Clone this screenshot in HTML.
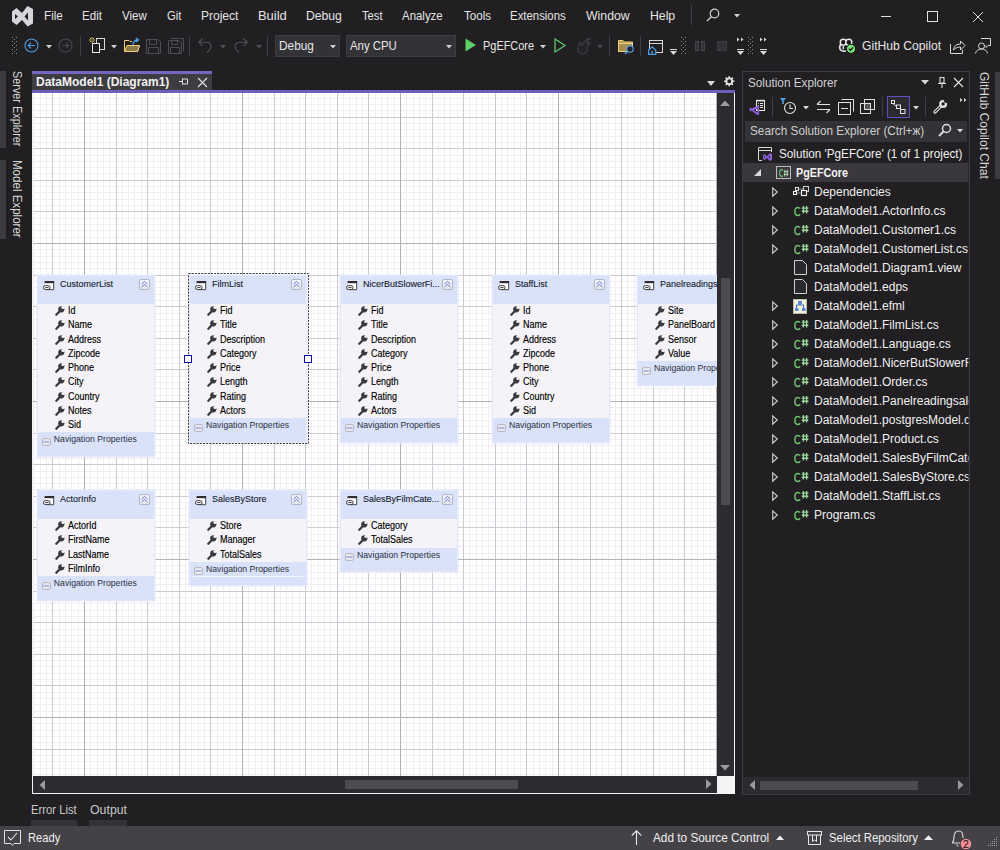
<!DOCTYPE html>
<html><head><meta charset="utf-8"><style>
*{margin:0;padding:0;box-sizing:border-box}
html,body{width:1000px;height:850px;overflow:hidden;background:#211f22;font-family:"Liberation Sans", sans-serif;color:#e6e6e6}
.a{position:absolute}
.t{position:absolute;white-space:nowrap;line-height:1}
svg{position:absolute;overflow:visible}
</style></head>
<body>
<div class="t" style="left:43.5px;top:10px;font-size:12px;color:#e4e4e4;transform:scaleX(0.9722);transform-origin:1.00px 0">File</div>
<div class="t" style="left:81.7px;top:10px;font-size:12px;color:#e4e4e4;transform:scaleX(0.9650);transform-origin:1.00px 0">Edit</div>
<div class="t" style="left:122.0px;top:10px;font-size:12px;color:#e4e4e4;transform:scaleX(0.9615);transform-origin:0.00px 0">View</div>
<div class="t" style="left:167.0px;top:10px;font-size:12px;color:#e4e4e4;transform:scaleX(0.9375);transform-origin:0.00px 0">Git</div>
<div class="t" style="left:201.0px;top:10px;font-size:12px;color:#e4e4e4;transform:scaleX(1.0000);transform-origin:1.00px 0">Project</div>
<div class="t" style="left:258.0px;top:10px;font-size:12px;color:#e4e4e4;transform:scaleX(1.0800);transform-origin:1.00px 0">Build</div>
<div class="t" style="left:305.5px;top:10px;font-size:12px;color:#e4e4e4;transform:scaleX(1.0147);transform-origin:1.00px 0">Debug</div>
<div class="t" style="left:361.5px;top:10px;font-size:12px;color:#e4e4e4;transform:scaleX(0.9318);transform-origin:0.00px 0">Test</div>
<div class="t" style="left:402.0px;top:10px;font-size:12px;color:#e4e4e4;transform:scaleX(0.9535);transform-origin:0.00px 0">Analyze</div>
<div class="t" style="left:464.0px;top:10px;font-size:12px;color:#e4e4e4;transform:scaleX(0.9643);transform-origin:0.00px 0">Tools</div>
<div class="t" style="left:510.0px;top:10px;font-size:12px;color:#e4e4e4;transform:scaleX(0.9483);transform-origin:1.00px 0">Extensions</div>
<div class="t" style="left:586.0px;top:10px;font-size:12px;color:#e4e4e4;transform:scaleX(1.0233);transform-origin:0.00px 0">Window</div>
<div class="t" style="left:649.5px;top:10px;font-size:12px;color:#e4e4e4;transform:scaleX(1.0208);transform-origin:1.00px 0">Help</div>
<svg style="left:12px;top:6px" width="21" height="21" viewBox="0 0 21 21">
<path d="M0 5.5 L4.5 2 L10 7 L15.5 0 L21 3 L21 17.5 L15.5 20.5 L10 14 L4.5 19 L0 15.5 Z M3 8 L3 13 L6 10.5 Z M16 6.5 L12.5 10.5 L16 14.5 Z" fill="#d6d5d9" fill-rule="evenodd"/>
</svg>
<div class="a" style="left:691px;top:5px;width:1px;height:20px;background:#3f3e43"></div>
<svg style="left:706px;top:8px" width="14" height="14" viewBox="0 0 14 14"><circle cx="8.5" cy="5.5" r="4.3" fill="none" stroke="#d0d0d0" stroke-width="1.2"/><line x1="5.3" y1="8.7" x2="1" y2="13" stroke="#d0d0d0" stroke-width="1.3"/></svg>
<svg style="left:734px;top:14px" width="6" height="4" viewBox="0 0 6 4"><path d="M0 0 H6 L3 3.5 Z" fill="#d0d0d0"/></svg>
<div class="a" style="left:881px;top:16px;width:10px;height:1px;background:#e0e0e0"></div>
<div class="a" style="left:927px;top:11px;width:11px;height:11px;border:1px solid #e0e0e0"></div>
<svg style="left:972px;top:11px" width="12" height="12" viewBox="0 0 12 12"><path d="M1 1 L11 11 M11 1 L1 11" stroke="#e0e0e0" stroke-width="1"/></svg>
<div class="a" style="left:12px;top:37px;width:1px;height:1px;background:#8a898c"></div><div class="a" style="left:16px;top:37px;width:1px;height:1px;background:#8a898c"></div><div class="a" style="left:14px;top:39px;width:1px;height:1px;background:#8a898c"></div><div class="a" style="left:12px;top:41px;width:1px;height:1px;background:#8a898c"></div><div class="a" style="left:16px;top:41px;width:1px;height:1px;background:#8a898c"></div><div class="a" style="left:14px;top:43px;width:1px;height:1px;background:#8a898c"></div><div class="a" style="left:12px;top:45px;width:1px;height:1px;background:#8a898c"></div><div class="a" style="left:16px;top:45px;width:1px;height:1px;background:#8a898c"></div><div class="a" style="left:14px;top:47px;width:1px;height:1px;background:#8a898c"></div><div class="a" style="left:12px;top:49px;width:1px;height:1px;background:#8a898c"></div><div class="a" style="left:16px;top:49px;width:1px;height:1px;background:#8a898c"></div><div class="a" style="left:14px;top:51px;width:1px;height:1px;background:#8a898c"></div><div class="a" style="left:12px;top:53px;width:1px;height:1px;background:#8a898c"></div><div class="a" style="left:16px;top:53px;width:1px;height:1px;background:#8a898c"></div>
<svg style="left:24px;top:38px" width="15" height="15" viewBox="0 0 15 15"><circle cx="7.5" cy="7.5" r="6.5" fill="none" stroke="#4b9fe8" stroke-width="1.1"/><path d="M11 7.5 H4.2 M7 4.7 L4.2 7.5 L7 10.3" fill="none" stroke="#4b9fe8" stroke-width="1.1"/></svg>
<svg style="left:46px;top:45px" width="6" height="4" viewBox="0 0 6 4"><path d="M0 0 H6 L3 3.5 Z" fill="#d0d0d0"/></svg>
<svg style="left:58px;top:38px" width="15" height="15" viewBox="0 0 15 15"><circle cx="7.5" cy="7.5" r="6.5" fill="none" stroke="#4a494d" stroke-width="1.1"/><path d="M4 7.5 H10.8 M8 4.7 L10.8 7.5 L8 10.3" fill="none" stroke="#4a494d" stroke-width="1.1"/></svg>
<div class="a" style="left:80px;top:36px;width:1px;height:20px;background:#3f3e43"></div>
<svg style="left:89px;top:37px" width="17" height="17" viewBox="0 0 17 17"><rect x="7.5" y="1.5" width="8" height="11" fill="#211f22" stroke="#d8d8d8"/><rect x="3.5" y="6.5" width="7" height="9" fill="#211f22" stroke="#e8e8e8"/><g stroke="#eccb6a" stroke-width="0.9"><path d="M3 0 V6 M0 3 H6 M1 1 L5 5 M5 1 L1 5"/></g><circle cx="3" cy="3" r="1" fill="#211f22"/></svg>
<svg style="left:111px;top:45px" width="6" height="4" viewBox="0 0 6 4"><path d="M0 0 H6 L3 3.5 Z" fill="#d0d0d0"/></svg>
<svg style="left:124px;top:37px" width="17" height="16" viewBox="0 0 17 16"><path d="M0.5 5.5 V14.5 H13.5 L15.5 8.5 H3.5 L1.5 14" fill="#b49a5a" stroke="#f0cf7a"/><path d="M0.5 5.5 V3.5 H5 L6 4.5 H8" fill="none" stroke="#f0cf7a"/><path d="M0.5 14.5 L3 8.5 H15.5 L13.5 14.5 Z" fill="#8d7a4d" stroke="#f0cf7a"/><path d="M9 8 C9 4 11 3 14 3 M12 1 L14.5 3 L12 5" fill="none" stroke="#4b9fe8" stroke-width="1.3"/></svg>
<svg style="left:146px;top:39px" width="15" height="15" viewBox="0 0 15 15"><path d="M0.5 0.5 H12 L14.5 3 V14.5 H0.5 Z M3.5 0.5 V5.5 H10.5 V0.5 M2.5 14.5 V8.5 H12.5 V14.5" fill="none" stroke="#4f4e52"/></svg>
<svg style="left:168px;top:38px" width="16" height="16" viewBox="0 0 16 16"><path d="M2.5 0.5 H15.5 V13.5" fill="none" stroke="#4f4e52"/><path d="M0.5 2.5 H11 L13.5 5 V15.5 H0.5 Z M3.5 2.5 V6.5 H9.5 V2.5 M2.5 15.5 V9.5 H11.5 V15.5" fill="none" stroke="#4f4e52"/></svg>
<div class="a" style="left:189px;top:36px;width:1px;height:20px;background:#3f3e43"></div>
<svg style="left:198px;top:38px" width="15" height="15" viewBox="0 0 15 15"><path d="M4.5 0.5 L0.8 4.3 L4.5 8 M1 4.3 H8 C11 4.3 13 6 13 8.5 C13 10.5 12 11.5 10.5 13 L9 14.5" fill="none" stroke="#4f4e52" stroke-width="1.1"/></svg>
<svg style="left:220px;top:45px" width="6" height="4" viewBox="0 0 6 4"><path d="M0 0 H6 L3 3.5 Z" fill="#4f4e52"/></svg>
<svg style="left:233px;top:38px" width="15" height="15" viewBox="0 0 15 15"><path d="M10.5 0.5 L14.2 4.3 L10.5 8 M14 4.3 H7 C4 4.3 2 6 2 8.5 C2 10.5 3 11.5 4.5 13 L6 14.5" fill="none" stroke="#4f4e52" stroke-width="1.1"/></svg>
<svg style="left:256px;top:45px" width="6" height="4" viewBox="0 0 6 4"><path d="M0 0 H6 L3 3.5 Z" fill="#4f4e52"/></svg>
<div class="a" style="left:267px;top:36px;width:1px;height:20px;background:#3f3e43"></div>
<div class="a" style="left:275px;top:35px;width:65px;height:22px;background:#333236;border:1px solid #3d3c40"></div>
<div class="t" style="left:278.8px;top:40px;font-size:12px;color:#e6e6e6;transform:scaleX(0.9882);transform-origin:1.00px 0">Debug</div>
<svg style="left:330px;top:45px" width="6" height="4" viewBox="0 0 6 4"><path d="M0 0 H6 L3 3.5 Z" fill="#d0d0d0"/></svg>
<div class="a" style="left:346px;top:35px;width:110px;height:22px;background:#333236;border:1px solid #3d3c40"></div>
<div class="t" style="left:350.1px;top:40px;font-size:12px;color:#e6e6e6;transform:scaleX(0.9490);transform-origin:0.00px 0">Any CPU</div>
<svg style="left:446px;top:45px" width="6" height="4" viewBox="0 0 6 4"><path d="M0 0 H6 L3 3.5 Z" fill="#d0d0d0"/></svg>
<svg style="left:465px;top:38px" width="12" height="14" viewBox="0 0 12 14"><path d="M0.5 0.5 L11 7 L0.5 13.5 Z" fill="#5fcf6a"/></svg>
<div class="t" style="left:482.8px;top:40px;font-size:12px;color:#e6e6e6;transform:scaleX(0.9091);transform-origin:1.00px 0">PgEFCore</div>
<svg style="left:540px;top:45px" width="6" height="4" viewBox="0 0 6 4"><path d="M0 0 H6 L3 3.5 Z" fill="#d0d0d0"/></svg>
<svg style="left:554px;top:38px" width="12" height="15" viewBox="0 0 12 15"><path d="M1 1 L11 7.5 L1 14 Z" fill="none" stroke="#5fcf6a" stroke-width="1.2"/></svg>
<svg style="left:577px;top:38px" width="15" height="17" viewBox="0 0 15 17"><path d="M5.5 15.8 C2.5 15.8 0.5 13.5 0.5 10.8 C0.5 8 2.2 5.8 3.5 4.5 C3.5 6 4 7 5 7.5 C5.5 4.5 8 1.5 13.5 0.5 C11 2 9.5 4 9.5 5.5 C10.5 4.8 12 4.6 13 5 C11 6.5 10.5 8.5 10.5 11 C10.5 13.5 8.5 15.8 5.5 15.8 Z" fill="#262428" stroke="#423f44" stroke-width="1.1"/></svg>
<svg style="left:597px;top:45px" width="6" height="4" viewBox="0 0 6 4"><path d="M0 0 H6 L3 3.5 Z" fill="#4a484c"/></svg>
<div class="a" style="left:609px;top:36px;width:1px;height:20px;background:#3f3e43"></div>
<svg style="left:618px;top:39px" width="17" height="16" viewBox="0 0 17 16"><path d="M0.5 12.5 V1.5 H5 L6.5 3 H14.5 V8" fill="#b49a5a" stroke="#f0cf7a"/><rect x="0.5" y="4.5" width="14" height="8" fill="#a88e52" stroke="#f0cf7a"/><circle cx="12" cy="10" r="3.2" fill="#211f22" stroke="#4b9fe8" stroke-width="1.2"/><path d="M9.8 12.2 L7 15" stroke="#4b9fe8" stroke-width="1.4"/></svg>
<div class="a" style="left:640px;top:36px;width:1px;height:20px;background:#3f3e43"></div>
<svg style="left:648px;top:40px" width="16" height="15" viewBox="0 0 16 15"><rect x="1.5" y="0.5" width="13" height="12" fill="none" stroke="#d8d8d8"/><path d="M1.5 3.5 H14.5" stroke="#d8d8d8"/><path d="M0.6 10.2 L4.2 6.8 L7.8 10.2 V14.4 H0.6 Z" fill="#211f22" stroke="#4b9fe8" stroke-width="1.2"/><rect x="3.4" y="11.2" width="1.6" height="2.4" fill="#4b9fe8"/></svg>
<div class="a" style="left:670px;top:49px;width:7px;height:1px;background:#d8d8d8"></div><svg style="left:670px;top:51px" width="7" height="4" viewBox="0 0 7 4"><path d="M0 0 H7 L3.5 4 Z" fill="#d8d8d8"/></svg>
<div class="a" style="left:681px;top:37px;width:1px;height:1px;background:#8a898c"></div><div class="a" style="left:685px;top:37px;width:1px;height:1px;background:#8a898c"></div><div class="a" style="left:683px;top:39px;width:1px;height:1px;background:#8a898c"></div><div class="a" style="left:681px;top:41px;width:1px;height:1px;background:#8a898c"></div><div class="a" style="left:685px;top:41px;width:1px;height:1px;background:#8a898c"></div><div class="a" style="left:683px;top:43px;width:1px;height:1px;background:#8a898c"></div><div class="a" style="left:681px;top:45px;width:1px;height:1px;background:#8a898c"></div><div class="a" style="left:685px;top:45px;width:1px;height:1px;background:#8a898c"></div><div class="a" style="left:683px;top:47px;width:1px;height:1px;background:#8a898c"></div><div class="a" style="left:681px;top:49px;width:1px;height:1px;background:#8a898c"></div><div class="a" style="left:685px;top:49px;width:1px;height:1px;background:#8a898c"></div><div class="a" style="left:683px;top:51px;width:1px;height:1px;background:#8a898c"></div><div class="a" style="left:681px;top:53px;width:1px;height:1px;background:#8a898c"></div><div class="a" style="left:685px;top:53px;width:1px;height:1px;background:#8a898c"></div>
<div class="a" style="left:695px;top:41px;width:4px;height:10px;background:#343236;border:1px solid #464448"></div><div class="a" style="left:701px;top:41px;width:4px;height:10px;background:#343236;border:1px solid #464448"></div>
<div class="a" style="left:717px;top:41px;width:10px;height:10px;background:#343236;border:1px solid #3e3c40"></div>
<div class="a" style="left:737px;top:49px;width:7px;height:1px;background:#d8d8d8"></div><svg style="left:737px;top:51px" width="7" height="4" viewBox="0 0 7 4"><path d="M0 0 H7 L3.5 4 Z" fill="#d8d8d8"/></svg><svg style="left:737px;top:37px" width="8" height="5" viewBox="0 0 8 4"><path d="M0 0 L2.5 2 L0 4 Z M4 0 L6.5 2 L4 4 Z" fill="#d8d8d8"/></svg>
<div class="a" style="left:748px;top:37px;width:1px;height:1px;background:#8a898c"></div><div class="a" style="left:752px;top:37px;width:1px;height:1px;background:#8a898c"></div><div class="a" style="left:750px;top:39px;width:1px;height:1px;background:#8a898c"></div><div class="a" style="left:748px;top:41px;width:1px;height:1px;background:#8a898c"></div><div class="a" style="left:752px;top:41px;width:1px;height:1px;background:#8a898c"></div><div class="a" style="left:750px;top:43px;width:1px;height:1px;background:#8a898c"></div><div class="a" style="left:748px;top:45px;width:1px;height:1px;background:#8a898c"></div><div class="a" style="left:752px;top:45px;width:1px;height:1px;background:#8a898c"></div><div class="a" style="left:750px;top:47px;width:1px;height:1px;background:#8a898c"></div><div class="a" style="left:748px;top:49px;width:1px;height:1px;background:#8a898c"></div><div class="a" style="left:752px;top:49px;width:1px;height:1px;background:#8a898c"></div><div class="a" style="left:750px;top:51px;width:1px;height:1px;background:#8a898c"></div><div class="a" style="left:748px;top:53px;width:1px;height:1px;background:#8a898c"></div><div class="a" style="left:752px;top:53px;width:1px;height:1px;background:#8a898c"></div>
<div class="a" style="left:760px;top:49px;width:7px;height:1px;background:#d8d8d8"></div><svg style="left:760px;top:51px" width="7" height="4" viewBox="0 0 7 4"><path d="M0 0 H7 L3.5 4 Z" fill="#d8d8d8"/></svg><svg style="left:760px;top:37px" width="8" height="5" viewBox="0 0 8 4"><path d="M0 0 L2.5 2 L0 4 Z M4 0 L6.5 2 L4 4 Z" fill="#d8d8d8"/></svg>
<svg style="left:839px;top:38px" width="18" height="17" viewBox="0 0 18 17"><circle cx="4.3" cy="4.2" r="3" fill="#19171a" stroke="#eaeaea" stroke-width="1.5"/><circle cx="9.8" cy="4.2" r="3" fill="#19171a" stroke="#eaeaea" stroke-width="1.5"/><path d="M1.6 6.5 C0.6 8 0.6 10.5 1.4 11.8 C2.5 13 5 13.3 7 13" fill="none" stroke="#eaeaea" stroke-width="1.5"/><rect x="3.6" y="8.2" width="1.4" height="3" fill="#eaeaea"/><circle cx="12" cy="10.8" r="4.6" fill="#78e078" stroke="#101010" stroke-width="1"/><path d="M9.9 10.6 L11.5 12.2 L14.1 9.4" fill="none" stroke="#101010" stroke-width="1.3"/></svg>
<div class="t" style="left:862.0px;top:40px;font-size:12px;color:#e6e6e6;transform:scaleX(1.0128);transform-origin:0.00px 0">GitHub Copilot</div>
<svg style="left:950px;top:39px" width="16" height="15" viewBox="0 0 16 15"><path d="M0.5 5 V14.5 H12.5 V11" fill="none" stroke="#d8d8d8"/><path d="M3.5 11 C4 6.5 7 5 10.5 5 V2 L15 6.5 L10.5 11 V8 C7.5 8 5 9 3.5 11 Z" fill="none" stroke="#d8d8d8"/></svg>
<svg style="left:975px;top:38px" width="16" height="16" viewBox="0 0 16 16"><path d="M6 0.5 H15.5 V7.5 H13 L11 9.5 V7.5" fill="none" stroke="#d8d8d8"/><circle cx="6.5" cy="8" r="3" fill="#211f22" stroke="#d8d8d8"/><path d="M0.5 15.5 C1 12.5 3.5 11 6.5 11 C9.5 11 12 12.5 12.5 15.5" fill="none" stroke="#d8d8d8"/></svg>
<div class="a" style="left:0;top:71px;width:6px;height:77px;background:#3d3b40"></div>
<div class="a" style="left:0;top:160px;width:6px;height:79px;background:#3d3b40"></div>
<div class="t" style="left:11px;top:71.0px;font-size:12px;color:#d6d6d6;writing-mode:vertical-rl;transform:scaleY(0.9048);transform-origin:0 0">Server Explorer</div>
<div class="t" style="left:11px;top:159.5375px;font-size:12px;color:#d6d6d6;writing-mode:vertical-rl;transform:scaleY(0.9625);transform-origin:0 0">Model Explorer</div>
<div class="a" style="left:995px;top:72px;width:5px;height:107px;background:#3d3c41"></div>
<div class="t" style="left:978px;top:72.0px;font-size:12px;color:#d6d6d6;writing-mode:vertical-rl;transform:scaleY(1.0000);transform-origin:0 0">GitHub Copilot Chat</div>
<div class="a" style="left:32px;top:71px;width:180px;height:3px;background:#7565c4"></div>
<div class="a" style="left:32px;top:74px;width:180px;height:16px;background:#3d3c40"></div>
<div class="t" style="left:36px;top:76px;font-size:12px;font-weight:bold;color:#f2f2f2">DataModel1 (Diagram1)</div>
<svg style="left:179px;top:77px" width="9" height="9" viewBox="0 0 9 9"><path d="M0 4.5 H3.5 M3.5 1.5 V7.5 M3.5 2 H8.5 V7 H3.5" fill="none" stroke="#e0e0e0"/></svg>
<svg style="left:197px;top:77px" width="11" height="11" viewBox="0 0 11 11"><path d="M1 1 L10 10 M10 1 L1 10" stroke="#e6e6e6" stroke-width="1.1"/></svg>
<div class="a" style="left:32px;top:90px;width:703px;height:3px;background:#6f5fbd"></div>
<svg style="left:707px;top:81px" width="8" height="5" viewBox="0 0 8 5"><path d="M0 0 H8 L4 5 Z" fill="#d8d8d8"/></svg>
<svg style="left:723.8px;top:75.8px" width="10.5" height="10.5" viewBox="0 0 12 12"><g fill="#e6e6e6"><rect x="5.1" y="0.2" width="1.8" height="2.6" transform="rotate(0 6 6)"/><rect x="5.1" y="0.2" width="1.8" height="2.6" transform="rotate(45 6 6)"/><rect x="5.1" y="0.2" width="1.8" height="2.6" transform="rotate(90 6 6)"/><rect x="5.1" y="0.2" width="1.8" height="2.6" transform="rotate(135 6 6)"/><rect x="5.1" y="0.2" width="1.8" height="2.6" transform="rotate(180 6 6)"/><rect x="5.1" y="0.2" width="1.8" height="2.6" transform="rotate(225 6 6)"/><rect x="5.1" y="0.2" width="1.8" height="2.6" transform="rotate(270 6 6)"/><rect x="5.1" y="0.2" width="1.8" height="2.6" transform="rotate(315 6 6)"/></g><circle cx="6" cy="6" r="3.3" fill="none" stroke="#e6e6e6" stroke-width="2"/></svg>
<div class="a" style="left:32px;top:93px;width:703px;height:701px;background:#f4f3f6"></div>
<div class="a" style="left:33px;top:93px;width:684px;height:683px;background:#ffffff;overflow:hidden" id="cv"><svg style="left:0;top:0" width="684" height="683" viewBox="0 0 684 683" shape-rendering="crispEdges"><path d="M0.5 0V683M7.5 0V683M13.5 0V683M26.5 0V683M32.5 0V683M38.5 0V683M45.5 0V683M57.5 0V683M64.5 0V683M70.5 0V683M76.5 0V683M89.5 0V683M95.5 0V683M101.5 0V683M108.5 0V683M120.5 0V683M127.5 0V683M133.5 0V683M139.5 0V683M152.5 0V683M158.5 0V683M165.5 0V683M171.5 0V683M184.5 0V683M190.5 0V683M196.5 0V683M203.5 0V683M215.5 0V683M222.5 0V683M228.5 0V683M234.5 0V683M247.5 0V683M253.5 0V683M259.5 0V683M266.5 0V683M278.5 0V683M285.5 0V683M291.5 0V683M297.5 0V683M310.5 0V683M316.5 0V683M323.5 0V683M329.5 0V683M342.5 0V683M348.5 0V683M354.5 0V683M361.5 0V683M373.5 0V683M380.5 0V683M386.5 0V683M392.5 0V683M405.5 0V683M411.5 0V683M417.5 0V683M424.5 0V683M436.5 0V683M443.5 0V683M449.5 0V683M455.5 0V683M468.5 0V683M474.5 0V683M481.5 0V683M487.5 0V683M500.5 0V683M506.5 0V683M512.5 0V683M519.5 0V683M531.5 0V683M538.5 0V683M544.5 0V683M550.5 0V683M563.5 0V683M569.5 0V683M575.5 0V683M582.5 0V683M594.5 0V683M601.5 0V683M607.5 0V683M613.5 0V683M626.5 0V683M632.5 0V683M639.5 0V683M645.5 0V683M658.5 0V683M664.5 0V683M670.5 0V683M677.5 0V683M0 5.5H684M0 11.5H684M0 17.5H684M0 30.5H684M0 36.5H684M0 43.5H684M0 49.5H684M0 62.5H684M0 68.5H684M0 74.5H684M0 80.5H684M0 93.5H684M0 99.5H684M0 106.5H684M0 112.5H684M0 125.5H684M0 131.5H684M0 137.5H684M0 144.5H684M0 156.5H684M0 163.5H684M0 169.5H684M0 175.5H684M0 188.5H684M0 194.5H684M0 201.5H684M0 207.5H684M0 220.5H684M0 226.5H684M0 232.5H684M0 238.5H684M0 251.5H684M0 257.5H684M0 264.5H684M0 270.5H684M0 283.5H684M0 289.5H684M0 295.5H684M0 302.5H684M0 314.5H684M0 321.5H684M0 327.5H684M0 333.5H684M0 346.5H684M0 352.5H684M0 359.5H684M0 365.5H684M0 378.5H684M0 384.5H684M0 390.5H684M0 396.5H684M0 409.5H684M0 415.5H684M0 422.5H684M0 428.5H684M0 441.5H684M0 447.5H684M0 453.5H684M0 460.5H684M0 472.5H684M0 479.5H684M0 485.5H684M0 491.5H684M0 504.5H684M0 510.5H684M0 517.5H684M0 523.5H684M0 536.5H684M0 542.5H684M0 548.5H684M0 554.5H684M0 567.5H684M0 573.5H684M0 580.5H684M0 586.5H684M0 599.5H684M0 605.5H684M0 611.5H684M0 618.5H684M0 630.5H684M0 637.5H684M0 643.5H684M0 649.5H684M0 662.5H684M0 668.5H684M0 675.5H684M0 681.5H684" stroke="#f2edf3" stroke-width="1" fill="none"/><path d="M19.5 0V683M83.5 0V683M114.5 0V683M146.5 0V683M177.5 0V683M241.5 0V683M272.5 0V683M304.5 0V683M335.5 0V683M399.5 0V683M430.5 0V683M462.5 0V683M493.5 0V683M557.5 0V683M588.5 0V683M620.5 0V683M651.5 0V683M0 24.5H684M0 55.5H684M0 87.5H684M0 118.5H684M0 182.5H684M0 213.5H684M0 245.5H684M0 276.5H684M0 340.5H684M0 371.5H684M0 403.5H684M0 434.5H684M0 498.5H684M0 529.5H684M0 561.5H684M0 592.5H684M0 656.5H684" stroke="#cdc9d0" stroke-width="1" fill="none"/><path d="M51.5 0V683M209.5 0V683M367.5 0V683M525.5 0V683M683.5 0V683M0 150.5H684M0 308.5H684M0 466.5H684M0 624.5H684" stroke="#b2afb5" stroke-width="1" fill="none"/></svg><div class="a" style="left:4.799999999999997px;top:182.5px;width:116px;height:180.25px;background:#d9e2f9;box-shadow:0 0 0 1.5px #e4eafa"><svg style="left:5px;top:5.5px" width="12" height="10" viewBox="0 0 12 10"><rect x="2" y="2" width="8.8" height="6.6" fill="#ffffff"/><rect x="1.6" y="0" width="9.6" height="2.2" fill="#303032"/><path d="M10.7 2 V8.7 H5" fill="none" stroke="#454547" stroke-width="1"/><rect x="0.5" y="4.6" width="6.6" height="4" rx="2" fill="#ffffff" stroke="#363638" stroke-width="1"/><path d="M2.2 6.6 H5.6" stroke="#363638" stroke-width="1"/></svg><div class="t" style="left:22px;top:3.2px;font-size:9.5px;color:#141a2c;transform:scaleX(0.945);transform-origin:0 0;-webkit-text-stroke:0.1px #141a2c">CustomerList</div><svg style="right:3.8px;top:3.5px" width="11" height="11" viewBox="0 0 11 11"><defs><linearGradient id="cbg" x1="0" y1="0" x2="0" y2="1"><stop offset="0" stop-color="#f8f8fc"/><stop offset="1" stop-color="#e2e4ec"/></linearGradient></defs><rect x="0.5" y="0.5" width="10" height="10" rx="1.5" fill="url(#cbg)" stroke="#b4b6be"/><path d="M2.6 5 L5.5 2.4 L8.4 5 M2.6 8 L5.5 5.4 L8.4 8" fill="none" stroke="#4a6fd6" stroke-width="0.9"/></svg><div class="a" style="left:0;top:28.5px;width:116px;height:128.25px;background:#f5f3f7"><div class="a" style="left:17px;top:2.2px;width:10px;height:10px"><svg style="left:0;top:0" width="10" height="10" viewBox="0 0 10 10"><path d="M1.3 8.7 L5 5" stroke="#3a3a3c" stroke-width="2.3" stroke-linecap="round"/><circle cx="6.3" cy="3.3" r="3.1" fill="#3a3a3c"/><circle cx="7.9" cy="1.5" r="1.55" fill="#f5f3f7"/></svg></div><div class="t" style="left:30px;top:2.1px;font-size:10px;color:#000;transform:scaleX(0.9);transform-origin:0 0;-webkit-text-stroke:0.15px #000">Id</div><div class="a" style="left:17px;top:16.45px;width:10px;height:10px"><svg style="left:0;top:0" width="10" height="10" viewBox="0 0 10 10"><path d="M1.3 8.7 L5 5" stroke="#3a3a3c" stroke-width="2.3" stroke-linecap="round"/><circle cx="6.3" cy="3.3" r="3.1" fill="#3a3a3c"/><circle cx="7.9" cy="1.5" r="1.55" fill="#f5f3f7"/></svg></div><div class="t" style="left:30px;top:16.35px;font-size:10px;color:#000;transform:scaleX(0.9);transform-origin:0 0;-webkit-text-stroke:0.15px #000">Name</div><div class="a" style="left:17px;top:30.7px;width:10px;height:10px"><svg style="left:0;top:0" width="10" height="10" viewBox="0 0 10 10"><path d="M1.3 8.7 L5 5" stroke="#3a3a3c" stroke-width="2.3" stroke-linecap="round"/><circle cx="6.3" cy="3.3" r="3.1" fill="#3a3a3c"/><circle cx="7.9" cy="1.5" r="1.55" fill="#f5f3f7"/></svg></div><div class="t" style="left:30px;top:30.6px;font-size:10px;color:#000;transform:scaleX(0.9);transform-origin:0 0;-webkit-text-stroke:0.15px #000">Address</div><div class="a" style="left:17px;top:44.95px;width:10px;height:10px"><svg style="left:0;top:0" width="10" height="10" viewBox="0 0 10 10"><path d="M1.3 8.7 L5 5" stroke="#3a3a3c" stroke-width="2.3" stroke-linecap="round"/><circle cx="6.3" cy="3.3" r="3.1" fill="#3a3a3c"/><circle cx="7.9" cy="1.5" r="1.55" fill="#f5f3f7"/></svg></div><div class="t" style="left:30px;top:44.85px;font-size:10px;color:#000;transform:scaleX(0.9);transform-origin:0 0;-webkit-text-stroke:0.15px #000">Zipcode</div><div class="a" style="left:17px;top:59.2px;width:10px;height:10px"><svg style="left:0;top:0" width="10" height="10" viewBox="0 0 10 10"><path d="M1.3 8.7 L5 5" stroke="#3a3a3c" stroke-width="2.3" stroke-linecap="round"/><circle cx="6.3" cy="3.3" r="3.1" fill="#3a3a3c"/><circle cx="7.9" cy="1.5" r="1.55" fill="#f5f3f7"/></svg></div><div class="t" style="left:30px;top:59.1px;font-size:10px;color:#000;transform:scaleX(0.9);transform-origin:0 0;-webkit-text-stroke:0.15px #000">Phone</div><div class="a" style="left:17px;top:73.45px;width:10px;height:10px"><svg style="left:0;top:0" width="10" height="10" viewBox="0 0 10 10"><path d="M1.3 8.7 L5 5" stroke="#3a3a3c" stroke-width="2.3" stroke-linecap="round"/><circle cx="6.3" cy="3.3" r="3.1" fill="#3a3a3c"/><circle cx="7.9" cy="1.5" r="1.55" fill="#f5f3f7"/></svg></div><div class="t" style="left:30px;top:73.35px;font-size:10px;color:#000;transform:scaleX(0.9);transform-origin:0 0;-webkit-text-stroke:0.15px #000">City</div><div class="a" style="left:17px;top:87.7px;width:10px;height:10px"><svg style="left:0;top:0" width="10" height="10" viewBox="0 0 10 10"><path d="M1.3 8.7 L5 5" stroke="#3a3a3c" stroke-width="2.3" stroke-linecap="round"/><circle cx="6.3" cy="3.3" r="3.1" fill="#3a3a3c"/><circle cx="7.9" cy="1.5" r="1.55" fill="#f5f3f7"/></svg></div><div class="t" style="left:30px;top:87.6px;font-size:10px;color:#000;transform:scaleX(0.9);transform-origin:0 0;-webkit-text-stroke:0.15px #000">Country</div><div class="a" style="left:17px;top:101.95px;width:10px;height:10px"><svg style="left:0;top:0" width="10" height="10" viewBox="0 0 10 10"><path d="M1.3 8.7 L5 5" stroke="#3a3a3c" stroke-width="2.3" stroke-linecap="round"/><circle cx="6.3" cy="3.3" r="3.1" fill="#3a3a3c"/><circle cx="7.9" cy="1.5" r="1.55" fill="#f5f3f7"/></svg></div><div class="t" style="left:30px;top:101.85px;font-size:10px;color:#000;transform:scaleX(0.9);transform-origin:0 0;-webkit-text-stroke:0.15px #000">Notes</div><div class="a" style="left:17px;top:116.2px;width:10px;height:10px"><svg style="left:0;top:0" width="10" height="10" viewBox="0 0 10 10"><path d="M1.3 8.7 L5 5" stroke="#3a3a3c" stroke-width="2.3" stroke-linecap="round"/><circle cx="6.3" cy="3.3" r="3.1" fill="#3a3a3c"/><circle cx="7.9" cy="1.5" r="1.55" fill="#f5f3f7"/></svg></div><div class="t" style="left:30px;top:116.1px;font-size:10px;color:#000;transform:scaleX(0.9);transform-origin:0 0;-webkit-text-stroke:0.15px #000">Sid</div></div><div class="a" style="left:0;top:156.75px;width:116px;height:23.5px"><svg style="left:4px;top:5.5px" width="9" height="8" viewBox="0 0 9 8"><rect x="0.5" y="0.5" width="8" height="7" rx="1.5" fill="#e8e8ee" stroke="#b9b9c0"/><path d="M1.5 4 H7.5" stroke="#7b8fd0"/></svg><div class="t" style="left:16px;top:3px;font-size:8.7px;color:#2a3040">Navigation Properties</div></div></div><div class="a" style="left:157px;top:182.5px;width:116px;height:166.0px;background:#d9e2f9;box-shadow:0 0 0 1.5px #e4eafa"><svg style="left:5px;top:5.5px" width="12" height="10" viewBox="0 0 12 10"><rect x="2" y="2" width="8.8" height="6.6" fill="#ffffff"/><rect x="1.6" y="0" width="9.6" height="2.2" fill="#303032"/><path d="M10.7 2 V8.7 H5" fill="none" stroke="#454547" stroke-width="1"/><rect x="0.5" y="4.6" width="6.6" height="4" rx="2" fill="#ffffff" stroke="#363638" stroke-width="1"/><path d="M2.2 6.6 H5.6" stroke="#363638" stroke-width="1"/></svg><div class="t" style="left:22px;top:3.2px;font-size:9.5px;color:#141a2c;transform:scaleX(0.945);transform-origin:0 0;-webkit-text-stroke:0.1px #141a2c">FilmList</div><svg style="right:3.8px;top:3.5px" width="11" height="11" viewBox="0 0 11 11"><defs><linearGradient id="cbg" x1="0" y1="0" x2="0" y2="1"><stop offset="0" stop-color="#f8f8fc"/><stop offset="1" stop-color="#e2e4ec"/></linearGradient></defs><rect x="0.5" y="0.5" width="10" height="10" rx="1.5" fill="url(#cbg)" stroke="#b4b6be"/><path d="M2.6 5 L5.5 2.4 L8.4 5 M2.6 8 L5.5 5.4 L8.4 8" fill="none" stroke="#4a6fd6" stroke-width="0.9"/></svg><div class="a" style="left:0;top:28.5px;width:116px;height:114.0px;background:#f5f3f7"><div class="a" style="left:17px;top:2.2px;width:10px;height:10px"><svg style="left:0;top:0" width="10" height="10" viewBox="0 0 10 10"><path d="M1.3 8.7 L5 5" stroke="#3a3a3c" stroke-width="2.3" stroke-linecap="round"/><circle cx="6.3" cy="3.3" r="3.1" fill="#3a3a3c"/><circle cx="7.9" cy="1.5" r="1.55" fill="#f5f3f7"/></svg></div><div class="t" style="left:30px;top:2.1px;font-size:10px;color:#000;transform:scaleX(0.9);transform-origin:0 0;-webkit-text-stroke:0.15px #000">Fid</div><div class="a" style="left:17px;top:16.45px;width:10px;height:10px"><svg style="left:0;top:0" width="10" height="10" viewBox="0 0 10 10"><path d="M1.3 8.7 L5 5" stroke="#3a3a3c" stroke-width="2.3" stroke-linecap="round"/><circle cx="6.3" cy="3.3" r="3.1" fill="#3a3a3c"/><circle cx="7.9" cy="1.5" r="1.55" fill="#f5f3f7"/></svg></div><div class="t" style="left:30px;top:16.35px;font-size:10px;color:#000;transform:scaleX(0.9);transform-origin:0 0;-webkit-text-stroke:0.15px #000">Title</div><div class="a" style="left:17px;top:30.7px;width:10px;height:10px"><svg style="left:0;top:0" width="10" height="10" viewBox="0 0 10 10"><path d="M1.3 8.7 L5 5" stroke="#3a3a3c" stroke-width="2.3" stroke-linecap="round"/><circle cx="6.3" cy="3.3" r="3.1" fill="#3a3a3c"/><circle cx="7.9" cy="1.5" r="1.55" fill="#f5f3f7"/></svg></div><div class="t" style="left:30px;top:30.6px;font-size:10px;color:#000;transform:scaleX(0.9);transform-origin:0 0;-webkit-text-stroke:0.15px #000">Description</div><div class="a" style="left:17px;top:44.95px;width:10px;height:10px"><svg style="left:0;top:0" width="10" height="10" viewBox="0 0 10 10"><path d="M1.3 8.7 L5 5" stroke="#3a3a3c" stroke-width="2.3" stroke-linecap="round"/><circle cx="6.3" cy="3.3" r="3.1" fill="#3a3a3c"/><circle cx="7.9" cy="1.5" r="1.55" fill="#f5f3f7"/></svg></div><div class="t" style="left:30px;top:44.85px;font-size:10px;color:#000;transform:scaleX(0.9);transform-origin:0 0;-webkit-text-stroke:0.15px #000">Category</div><div class="a" style="left:17px;top:59.2px;width:10px;height:10px"><svg style="left:0;top:0" width="10" height="10" viewBox="0 0 10 10"><path d="M1.3 8.7 L5 5" stroke="#3a3a3c" stroke-width="2.3" stroke-linecap="round"/><circle cx="6.3" cy="3.3" r="3.1" fill="#3a3a3c"/><circle cx="7.9" cy="1.5" r="1.55" fill="#f5f3f7"/></svg></div><div class="t" style="left:30px;top:59.1px;font-size:10px;color:#000;transform:scaleX(0.9);transform-origin:0 0;-webkit-text-stroke:0.15px #000">Price</div><div class="a" style="left:17px;top:73.45px;width:10px;height:10px"><svg style="left:0;top:0" width="10" height="10" viewBox="0 0 10 10"><path d="M1.3 8.7 L5 5" stroke="#3a3a3c" stroke-width="2.3" stroke-linecap="round"/><circle cx="6.3" cy="3.3" r="3.1" fill="#3a3a3c"/><circle cx="7.9" cy="1.5" r="1.55" fill="#f5f3f7"/></svg></div><div class="t" style="left:30px;top:73.35px;font-size:10px;color:#000;transform:scaleX(0.9);transform-origin:0 0;-webkit-text-stroke:0.15px #000">Length</div><div class="a" style="left:17px;top:87.7px;width:10px;height:10px"><svg style="left:0;top:0" width="10" height="10" viewBox="0 0 10 10"><path d="M1.3 8.7 L5 5" stroke="#3a3a3c" stroke-width="2.3" stroke-linecap="round"/><circle cx="6.3" cy="3.3" r="3.1" fill="#3a3a3c"/><circle cx="7.9" cy="1.5" r="1.55" fill="#f5f3f7"/></svg></div><div class="t" style="left:30px;top:87.6px;font-size:10px;color:#000;transform:scaleX(0.9);transform-origin:0 0;-webkit-text-stroke:0.15px #000">Rating</div><div class="a" style="left:17px;top:101.95px;width:10px;height:10px"><svg style="left:0;top:0" width="10" height="10" viewBox="0 0 10 10"><path d="M1.3 8.7 L5 5" stroke="#3a3a3c" stroke-width="2.3" stroke-linecap="round"/><circle cx="6.3" cy="3.3" r="3.1" fill="#3a3a3c"/><circle cx="7.9" cy="1.5" r="1.55" fill="#f5f3f7"/></svg></div><div class="t" style="left:30px;top:101.85px;font-size:10px;color:#000;transform:scaleX(0.9);transform-origin:0 0;-webkit-text-stroke:0.15px #000">Actors</div></div><div class="a" style="left:0;top:142.5px;width:116px;height:23.5px"><svg style="left:4px;top:5.5px" width="9" height="8" viewBox="0 0 9 8"><rect x="0.5" y="0.5" width="8" height="7" rx="1.5" fill="#e8e8ee" stroke="#b9b9c0"/><path d="M1.5 4 H7.5" stroke="#7b8fd0"/></svg><div class="t" style="left:16px;top:3px;font-size:8.7px;color:#2a3040">Navigation Properties</div></div></div><svg style="left:154.5px;top:180.0px" width="121" height="171.0" viewBox="0 0 121 171.0"><rect x="0.5" y="0.5" width="120" height="170.0" fill="none" stroke="#3a3a3a" stroke-width="1" stroke-dasharray="2 1.2"/></svg><div class="a" style="left:151px;top:261.5px;width:8px;height:8px;border:1.5px solid #1010a8;background:#fff"></div><div class="a" style="left:271px;top:261.5px;width:8px;height:8px;border:1.5px solid #1010a8;background:#fff"></div><div class="a" style="left:308px;top:182.5px;width:116px;height:166.0px;background:#d9e2f9;box-shadow:0 0 0 1.5px #e4eafa"><svg style="left:5px;top:5.5px" width="12" height="10" viewBox="0 0 12 10"><rect x="2" y="2" width="8.8" height="6.6" fill="#ffffff"/><rect x="1.6" y="0" width="9.6" height="2.2" fill="#303032"/><path d="M10.7 2 V8.7 H5" fill="none" stroke="#454547" stroke-width="1"/><rect x="0.5" y="4.6" width="6.6" height="4" rx="2" fill="#ffffff" stroke="#363638" stroke-width="1"/><path d="M2.2 6.6 H5.6" stroke="#363638" stroke-width="1"/></svg><div class="t" style="left:22px;top:3.2px;font-size:9.5px;color:#141a2c;transform:scaleX(0.945);transform-origin:0 0;-webkit-text-stroke:0.1px #141a2c">NicerButSlowerFi...</div><svg style="right:3.8px;top:3.5px" width="11" height="11" viewBox="0 0 11 11"><defs><linearGradient id="cbg" x1="0" y1="0" x2="0" y2="1"><stop offset="0" stop-color="#f8f8fc"/><stop offset="1" stop-color="#e2e4ec"/></linearGradient></defs><rect x="0.5" y="0.5" width="10" height="10" rx="1.5" fill="url(#cbg)" stroke="#b4b6be"/><path d="M2.6 5 L5.5 2.4 L8.4 5 M2.6 8 L5.5 5.4 L8.4 8" fill="none" stroke="#4a6fd6" stroke-width="0.9"/></svg><div class="a" style="left:0;top:28.5px;width:116px;height:114.0px;background:#f5f3f7"><div class="a" style="left:17px;top:2.2px;width:10px;height:10px"><svg style="left:0;top:0" width="10" height="10" viewBox="0 0 10 10"><path d="M1.3 8.7 L5 5" stroke="#3a3a3c" stroke-width="2.3" stroke-linecap="round"/><circle cx="6.3" cy="3.3" r="3.1" fill="#3a3a3c"/><circle cx="7.9" cy="1.5" r="1.55" fill="#f5f3f7"/></svg></div><div class="t" style="left:30px;top:2.1px;font-size:10px;color:#000;transform:scaleX(0.9);transform-origin:0 0;-webkit-text-stroke:0.15px #000">Fid</div><div class="a" style="left:17px;top:16.45px;width:10px;height:10px"><svg style="left:0;top:0" width="10" height="10" viewBox="0 0 10 10"><path d="M1.3 8.7 L5 5" stroke="#3a3a3c" stroke-width="2.3" stroke-linecap="round"/><circle cx="6.3" cy="3.3" r="3.1" fill="#3a3a3c"/><circle cx="7.9" cy="1.5" r="1.55" fill="#f5f3f7"/></svg></div><div class="t" style="left:30px;top:16.35px;font-size:10px;color:#000;transform:scaleX(0.9);transform-origin:0 0;-webkit-text-stroke:0.15px #000">Title</div><div class="a" style="left:17px;top:30.7px;width:10px;height:10px"><svg style="left:0;top:0" width="10" height="10" viewBox="0 0 10 10"><path d="M1.3 8.7 L5 5" stroke="#3a3a3c" stroke-width="2.3" stroke-linecap="round"/><circle cx="6.3" cy="3.3" r="3.1" fill="#3a3a3c"/><circle cx="7.9" cy="1.5" r="1.55" fill="#f5f3f7"/></svg></div><div class="t" style="left:30px;top:30.6px;font-size:10px;color:#000;transform:scaleX(0.9);transform-origin:0 0;-webkit-text-stroke:0.15px #000">Description</div><div class="a" style="left:17px;top:44.95px;width:10px;height:10px"><svg style="left:0;top:0" width="10" height="10" viewBox="0 0 10 10"><path d="M1.3 8.7 L5 5" stroke="#3a3a3c" stroke-width="2.3" stroke-linecap="round"/><circle cx="6.3" cy="3.3" r="3.1" fill="#3a3a3c"/><circle cx="7.9" cy="1.5" r="1.55" fill="#f5f3f7"/></svg></div><div class="t" style="left:30px;top:44.85px;font-size:10px;color:#000;transform:scaleX(0.9);transform-origin:0 0;-webkit-text-stroke:0.15px #000">Category</div><div class="a" style="left:17px;top:59.2px;width:10px;height:10px"><svg style="left:0;top:0" width="10" height="10" viewBox="0 0 10 10"><path d="M1.3 8.7 L5 5" stroke="#3a3a3c" stroke-width="2.3" stroke-linecap="round"/><circle cx="6.3" cy="3.3" r="3.1" fill="#3a3a3c"/><circle cx="7.9" cy="1.5" r="1.55" fill="#f5f3f7"/></svg></div><div class="t" style="left:30px;top:59.1px;font-size:10px;color:#000;transform:scaleX(0.9);transform-origin:0 0;-webkit-text-stroke:0.15px #000">Price</div><div class="a" style="left:17px;top:73.45px;width:10px;height:10px"><svg style="left:0;top:0" width="10" height="10" viewBox="0 0 10 10"><path d="M1.3 8.7 L5 5" stroke="#3a3a3c" stroke-width="2.3" stroke-linecap="round"/><circle cx="6.3" cy="3.3" r="3.1" fill="#3a3a3c"/><circle cx="7.9" cy="1.5" r="1.55" fill="#f5f3f7"/></svg></div><div class="t" style="left:30px;top:73.35px;font-size:10px;color:#000;transform:scaleX(0.9);transform-origin:0 0;-webkit-text-stroke:0.15px #000">Length</div><div class="a" style="left:17px;top:87.7px;width:10px;height:10px"><svg style="left:0;top:0" width="10" height="10" viewBox="0 0 10 10"><path d="M1.3 8.7 L5 5" stroke="#3a3a3c" stroke-width="2.3" stroke-linecap="round"/><circle cx="6.3" cy="3.3" r="3.1" fill="#3a3a3c"/><circle cx="7.9" cy="1.5" r="1.55" fill="#f5f3f7"/></svg></div><div class="t" style="left:30px;top:87.6px;font-size:10px;color:#000;transform:scaleX(0.9);transform-origin:0 0;-webkit-text-stroke:0.15px #000">Rating</div><div class="a" style="left:17px;top:101.95px;width:10px;height:10px"><svg style="left:0;top:0" width="10" height="10" viewBox="0 0 10 10"><path d="M1.3 8.7 L5 5" stroke="#3a3a3c" stroke-width="2.3" stroke-linecap="round"/><circle cx="6.3" cy="3.3" r="3.1" fill="#3a3a3c"/><circle cx="7.9" cy="1.5" r="1.55" fill="#f5f3f7"/></svg></div><div class="t" style="left:30px;top:101.85px;font-size:10px;color:#000;transform:scaleX(0.9);transform-origin:0 0;-webkit-text-stroke:0.15px #000">Actors</div></div><div class="a" style="left:0;top:142.5px;width:116px;height:23.5px"><svg style="left:4px;top:5.5px" width="9" height="8" viewBox="0 0 9 8"><rect x="0.5" y="0.5" width="8" height="7" rx="1.5" fill="#e8e8ee" stroke="#b9b9c0"/><path d="M1.5 4 H7.5" stroke="#7b8fd0"/></svg><div class="t" style="left:16px;top:3px;font-size:8.7px;color:#2a3040">Navigation Properties</div></div></div><div class="a" style="left:460px;top:182.5px;width:116px;height:166.0px;background:#d9e2f9;box-shadow:0 0 0 1.5px #e4eafa"><svg style="left:5px;top:5.5px" width="12" height="10" viewBox="0 0 12 10"><rect x="2" y="2" width="8.8" height="6.6" fill="#ffffff"/><rect x="1.6" y="0" width="9.6" height="2.2" fill="#303032"/><path d="M10.7 2 V8.7 H5" fill="none" stroke="#454547" stroke-width="1"/><rect x="0.5" y="4.6" width="6.6" height="4" rx="2" fill="#ffffff" stroke="#363638" stroke-width="1"/><path d="M2.2 6.6 H5.6" stroke="#363638" stroke-width="1"/></svg><div class="t" style="left:22px;top:3.2px;font-size:9.5px;color:#141a2c;transform:scaleX(0.945);transform-origin:0 0;-webkit-text-stroke:0.1px #141a2c">StaffList</div><svg style="right:3.8px;top:3.5px" width="11" height="11" viewBox="0 0 11 11"><defs><linearGradient id="cbg" x1="0" y1="0" x2="0" y2="1"><stop offset="0" stop-color="#f8f8fc"/><stop offset="1" stop-color="#e2e4ec"/></linearGradient></defs><rect x="0.5" y="0.5" width="10" height="10" rx="1.5" fill="url(#cbg)" stroke="#b4b6be"/><path d="M2.6 5 L5.5 2.4 L8.4 5 M2.6 8 L5.5 5.4 L8.4 8" fill="none" stroke="#4a6fd6" stroke-width="0.9"/></svg><div class="a" style="left:0;top:28.5px;width:116px;height:114.0px;background:#f5f3f7"><div class="a" style="left:17px;top:2.2px;width:10px;height:10px"><svg style="left:0;top:0" width="10" height="10" viewBox="0 0 10 10"><path d="M1.3 8.7 L5 5" stroke="#3a3a3c" stroke-width="2.3" stroke-linecap="round"/><circle cx="6.3" cy="3.3" r="3.1" fill="#3a3a3c"/><circle cx="7.9" cy="1.5" r="1.55" fill="#f5f3f7"/></svg></div><div class="t" style="left:30px;top:2.1px;font-size:10px;color:#000;transform:scaleX(0.9);transform-origin:0 0;-webkit-text-stroke:0.15px #000">Id</div><div class="a" style="left:17px;top:16.45px;width:10px;height:10px"><svg style="left:0;top:0" width="10" height="10" viewBox="0 0 10 10"><path d="M1.3 8.7 L5 5" stroke="#3a3a3c" stroke-width="2.3" stroke-linecap="round"/><circle cx="6.3" cy="3.3" r="3.1" fill="#3a3a3c"/><circle cx="7.9" cy="1.5" r="1.55" fill="#f5f3f7"/></svg></div><div class="t" style="left:30px;top:16.35px;font-size:10px;color:#000;transform:scaleX(0.9);transform-origin:0 0;-webkit-text-stroke:0.15px #000">Name</div><div class="a" style="left:17px;top:30.7px;width:10px;height:10px"><svg style="left:0;top:0" width="10" height="10" viewBox="0 0 10 10"><path d="M1.3 8.7 L5 5" stroke="#3a3a3c" stroke-width="2.3" stroke-linecap="round"/><circle cx="6.3" cy="3.3" r="3.1" fill="#3a3a3c"/><circle cx="7.9" cy="1.5" r="1.55" fill="#f5f3f7"/></svg></div><div class="t" style="left:30px;top:30.6px;font-size:10px;color:#000;transform:scaleX(0.9);transform-origin:0 0;-webkit-text-stroke:0.15px #000">Address</div><div class="a" style="left:17px;top:44.95px;width:10px;height:10px"><svg style="left:0;top:0" width="10" height="10" viewBox="0 0 10 10"><path d="M1.3 8.7 L5 5" stroke="#3a3a3c" stroke-width="2.3" stroke-linecap="round"/><circle cx="6.3" cy="3.3" r="3.1" fill="#3a3a3c"/><circle cx="7.9" cy="1.5" r="1.55" fill="#f5f3f7"/></svg></div><div class="t" style="left:30px;top:44.85px;font-size:10px;color:#000;transform:scaleX(0.9);transform-origin:0 0;-webkit-text-stroke:0.15px #000">Zipcode</div><div class="a" style="left:17px;top:59.2px;width:10px;height:10px"><svg style="left:0;top:0" width="10" height="10" viewBox="0 0 10 10"><path d="M1.3 8.7 L5 5" stroke="#3a3a3c" stroke-width="2.3" stroke-linecap="round"/><circle cx="6.3" cy="3.3" r="3.1" fill="#3a3a3c"/><circle cx="7.9" cy="1.5" r="1.55" fill="#f5f3f7"/></svg></div><div class="t" style="left:30px;top:59.1px;font-size:10px;color:#000;transform:scaleX(0.9);transform-origin:0 0;-webkit-text-stroke:0.15px #000">Phone</div><div class="a" style="left:17px;top:73.45px;width:10px;height:10px"><svg style="left:0;top:0" width="10" height="10" viewBox="0 0 10 10"><path d="M1.3 8.7 L5 5" stroke="#3a3a3c" stroke-width="2.3" stroke-linecap="round"/><circle cx="6.3" cy="3.3" r="3.1" fill="#3a3a3c"/><circle cx="7.9" cy="1.5" r="1.55" fill="#f5f3f7"/></svg></div><div class="t" style="left:30px;top:73.35px;font-size:10px;color:#000;transform:scaleX(0.9);transform-origin:0 0;-webkit-text-stroke:0.15px #000">City</div><div class="a" style="left:17px;top:87.7px;width:10px;height:10px"><svg style="left:0;top:0" width="10" height="10" viewBox="0 0 10 10"><path d="M1.3 8.7 L5 5" stroke="#3a3a3c" stroke-width="2.3" stroke-linecap="round"/><circle cx="6.3" cy="3.3" r="3.1" fill="#3a3a3c"/><circle cx="7.9" cy="1.5" r="1.55" fill="#f5f3f7"/></svg></div><div class="t" style="left:30px;top:87.6px;font-size:10px;color:#000;transform:scaleX(0.9);transform-origin:0 0;-webkit-text-stroke:0.15px #000">Country</div><div class="a" style="left:17px;top:101.95px;width:10px;height:10px"><svg style="left:0;top:0" width="10" height="10" viewBox="0 0 10 10"><path d="M1.3 8.7 L5 5" stroke="#3a3a3c" stroke-width="2.3" stroke-linecap="round"/><circle cx="6.3" cy="3.3" r="3.1" fill="#3a3a3c"/><circle cx="7.9" cy="1.5" r="1.55" fill="#f5f3f7"/></svg></div><div class="t" style="left:30px;top:101.85px;font-size:10px;color:#000;transform:scaleX(0.9);transform-origin:0 0;-webkit-text-stroke:0.15px #000">Sid</div></div><div class="a" style="left:0;top:142.5px;width:116px;height:23.5px"><svg style="left:4px;top:5.5px" width="9" height="8" viewBox="0 0 9 8"><rect x="0.5" y="0.5" width="8" height="7" rx="1.5" fill="#e8e8ee" stroke="#b9b9c0"/><path d="M1.5 4 H7.5" stroke="#7b8fd0"/></svg><div class="t" style="left:16px;top:3px;font-size:8.7px;color:#2a3040">Navigation Properties</div></div></div><div class="a" style="left:605px;top:182.5px;width:116px;height:109.0px;background:#d9e2f9;box-shadow:0 0 0 1.5px #e4eafa"><svg style="left:5px;top:5.5px" width="12" height="10" viewBox="0 0 12 10"><rect x="2" y="2" width="8.8" height="6.6" fill="#ffffff"/><rect x="1.6" y="0" width="9.6" height="2.2" fill="#303032"/><path d="M10.7 2 V8.7 H5" fill="none" stroke="#454547" stroke-width="1"/><rect x="0.5" y="4.6" width="6.6" height="4" rx="2" fill="#ffffff" stroke="#363638" stroke-width="1"/><path d="M2.2 6.6 H5.6" stroke="#363638" stroke-width="1"/></svg><div class="t" style="left:22px;top:3.2px;font-size:9.5px;color:#141a2c;transform:scaleX(0.945);transform-origin:0 0;-webkit-text-stroke:0.1px #141a2c">Panelreadingsale</div><div class="a" style="left:0;top:28.5px;width:116px;height:57.0px;background:#f5f3f7"><div class="a" style="left:17px;top:2.2px;width:10px;height:10px"><svg style="left:0;top:0" width="10" height="10" viewBox="0 0 10 10"><path d="M1.3 8.7 L5 5" stroke="#3a3a3c" stroke-width="2.3" stroke-linecap="round"/><circle cx="6.3" cy="3.3" r="3.1" fill="#3a3a3c"/><circle cx="7.9" cy="1.5" r="1.55" fill="#f5f3f7"/></svg></div><div class="t" style="left:30px;top:2.1px;font-size:10px;color:#000;transform:scaleX(0.9);transform-origin:0 0;-webkit-text-stroke:0.15px #000">Site</div><div class="a" style="left:17px;top:16.45px;width:10px;height:10px"><svg style="left:0;top:0" width="10" height="10" viewBox="0 0 10 10"><path d="M1.3 8.7 L5 5" stroke="#3a3a3c" stroke-width="2.3" stroke-linecap="round"/><circle cx="6.3" cy="3.3" r="3.1" fill="#3a3a3c"/><circle cx="7.9" cy="1.5" r="1.55" fill="#f5f3f7"/></svg></div><div class="t" style="left:30px;top:16.35px;font-size:10px;color:#000;transform:scaleX(0.9);transform-origin:0 0;-webkit-text-stroke:0.15px #000">PanelBoard</div><div class="a" style="left:17px;top:30.7px;width:10px;height:10px"><svg style="left:0;top:0" width="10" height="10" viewBox="0 0 10 10"><path d="M1.3 8.7 L5 5" stroke="#3a3a3c" stroke-width="2.3" stroke-linecap="round"/><circle cx="6.3" cy="3.3" r="3.1" fill="#3a3a3c"/><circle cx="7.9" cy="1.5" r="1.55" fill="#f5f3f7"/></svg></div><div class="t" style="left:30px;top:30.6px;font-size:10px;color:#000;transform:scaleX(0.9);transform-origin:0 0;-webkit-text-stroke:0.15px #000">Sensor</div><div class="a" style="left:17px;top:44.95px;width:10px;height:10px"><svg style="left:0;top:0" width="10" height="10" viewBox="0 0 10 10"><path d="M1.3 8.7 L5 5" stroke="#3a3a3c" stroke-width="2.3" stroke-linecap="round"/><circle cx="6.3" cy="3.3" r="3.1" fill="#3a3a3c"/><circle cx="7.9" cy="1.5" r="1.55" fill="#f5f3f7"/></svg></div><div class="t" style="left:30px;top:44.85px;font-size:10px;color:#000;transform:scaleX(0.9);transform-origin:0 0;-webkit-text-stroke:0.15px #000">Value</div></div><div class="a" style="left:0;top:85.5px;width:116px;height:23.5px"><svg style="left:4px;top:5.5px" width="9" height="8" viewBox="0 0 9 8"><rect x="0.5" y="0.5" width="8" height="7" rx="1.5" fill="#e8e8ee" stroke="#b9b9c0"/><path d="M1.5 4 H7.5" stroke="#7b8fd0"/></svg><div class="t" style="left:16px;top:3px;font-size:8.7px;color:#2a3040">Navigation Properties</div></div></div><div class="a" style="left:4.799999999999997px;top:397.5px;width:116px;height:109.0px;background:#d9e2f9;box-shadow:0 0 0 1.5px #e4eafa"><svg style="left:5px;top:5.5px" width="12" height="10" viewBox="0 0 12 10"><rect x="2" y="2" width="8.8" height="6.6" fill="#ffffff"/><rect x="1.6" y="0" width="9.6" height="2.2" fill="#303032"/><path d="M10.7 2 V8.7 H5" fill="none" stroke="#454547" stroke-width="1"/><rect x="0.5" y="4.6" width="6.6" height="4" rx="2" fill="#ffffff" stroke="#363638" stroke-width="1"/><path d="M2.2 6.6 H5.6" stroke="#363638" stroke-width="1"/></svg><div class="t" style="left:22px;top:3.2px;font-size:9.5px;color:#141a2c;transform:scaleX(0.945);transform-origin:0 0;-webkit-text-stroke:0.1px #141a2c">ActorInfo</div><svg style="right:3.8px;top:3.5px" width="11" height="11" viewBox="0 0 11 11"><defs><linearGradient id="cbg" x1="0" y1="0" x2="0" y2="1"><stop offset="0" stop-color="#f8f8fc"/><stop offset="1" stop-color="#e2e4ec"/></linearGradient></defs><rect x="0.5" y="0.5" width="10" height="10" rx="1.5" fill="url(#cbg)" stroke="#b4b6be"/><path d="M2.6 5 L5.5 2.4 L8.4 5 M2.6 8 L5.5 5.4 L8.4 8" fill="none" stroke="#4a6fd6" stroke-width="0.9"/></svg><div class="a" style="left:0;top:28.5px;width:116px;height:57.0px;background:#f5f3f7"><div class="a" style="left:17px;top:2.2px;width:10px;height:10px"><svg style="left:0;top:0" width="10" height="10" viewBox="0 0 10 10"><path d="M1.3 8.7 L5 5" stroke="#3a3a3c" stroke-width="2.3" stroke-linecap="round"/><circle cx="6.3" cy="3.3" r="3.1" fill="#3a3a3c"/><circle cx="7.9" cy="1.5" r="1.55" fill="#f5f3f7"/></svg></div><div class="t" style="left:30px;top:2.1px;font-size:10px;color:#000;transform:scaleX(0.9);transform-origin:0 0;-webkit-text-stroke:0.15px #000">ActorId</div><div class="a" style="left:17px;top:16.45px;width:10px;height:10px"><svg style="left:0;top:0" width="10" height="10" viewBox="0 0 10 10"><path d="M1.3 8.7 L5 5" stroke="#3a3a3c" stroke-width="2.3" stroke-linecap="round"/><circle cx="6.3" cy="3.3" r="3.1" fill="#3a3a3c"/><circle cx="7.9" cy="1.5" r="1.55" fill="#f5f3f7"/></svg></div><div class="t" style="left:30px;top:16.35px;font-size:10px;color:#000;transform:scaleX(0.9);transform-origin:0 0;-webkit-text-stroke:0.15px #000">FirstName</div><div class="a" style="left:17px;top:30.7px;width:10px;height:10px"><svg style="left:0;top:0" width="10" height="10" viewBox="0 0 10 10"><path d="M1.3 8.7 L5 5" stroke="#3a3a3c" stroke-width="2.3" stroke-linecap="round"/><circle cx="6.3" cy="3.3" r="3.1" fill="#3a3a3c"/><circle cx="7.9" cy="1.5" r="1.55" fill="#f5f3f7"/></svg></div><div class="t" style="left:30px;top:30.6px;font-size:10px;color:#000;transform:scaleX(0.9);transform-origin:0 0;-webkit-text-stroke:0.15px #000">LastName</div><div class="a" style="left:17px;top:44.95px;width:10px;height:10px"><svg style="left:0;top:0" width="10" height="10" viewBox="0 0 10 10"><path d="M1.3 8.7 L5 5" stroke="#3a3a3c" stroke-width="2.3" stroke-linecap="round"/><circle cx="6.3" cy="3.3" r="3.1" fill="#3a3a3c"/><circle cx="7.9" cy="1.5" r="1.55" fill="#f5f3f7"/></svg></div><div class="t" style="left:30px;top:44.85px;font-size:10px;color:#000;transform:scaleX(0.9);transform-origin:0 0;-webkit-text-stroke:0.15px #000">FilmInfo</div></div><div class="a" style="left:0;top:85.5px;width:116px;height:23.5px"><svg style="left:4px;top:5.5px" width="9" height="8" viewBox="0 0 9 8"><rect x="0.5" y="0.5" width="8" height="7" rx="1.5" fill="#e8e8ee" stroke="#b9b9c0"/><path d="M1.5 4 H7.5" stroke="#7b8fd0"/></svg><div class="t" style="left:16px;top:3px;font-size:8.7px;color:#2a3040">Navigation Properties</div></div></div><div class="a" style="left:157px;top:397.5px;width:116px;height:94.75px;background:#d9e2f9;box-shadow:0 0 0 1.5px #e4eafa"><svg style="left:5px;top:5.5px" width="12" height="10" viewBox="0 0 12 10"><rect x="2" y="2" width="8.8" height="6.6" fill="#ffffff"/><rect x="1.6" y="0" width="9.6" height="2.2" fill="#303032"/><path d="M10.7 2 V8.7 H5" fill="none" stroke="#454547" stroke-width="1"/><rect x="0.5" y="4.6" width="6.6" height="4" rx="2" fill="#ffffff" stroke="#363638" stroke-width="1"/><path d="M2.2 6.6 H5.6" stroke="#363638" stroke-width="1"/></svg><div class="t" style="left:22px;top:3.2px;font-size:9.5px;color:#141a2c;transform:scaleX(0.945);transform-origin:0 0;-webkit-text-stroke:0.1px #141a2c">SalesByStore</div><svg style="right:3.8px;top:3.5px" width="11" height="11" viewBox="0 0 11 11"><defs><linearGradient id="cbg" x1="0" y1="0" x2="0" y2="1"><stop offset="0" stop-color="#f8f8fc"/><stop offset="1" stop-color="#e2e4ec"/></linearGradient></defs><rect x="0.5" y="0.5" width="10" height="10" rx="1.5" fill="url(#cbg)" stroke="#b4b6be"/><path d="M2.6 5 L5.5 2.4 L8.4 5 M2.6 8 L5.5 5.4 L8.4 8" fill="none" stroke="#4a6fd6" stroke-width="0.9"/></svg><div class="a" style="left:0;top:28.5px;width:116px;height:42.75px;background:#f5f3f7"><div class="a" style="left:17px;top:2.2px;width:10px;height:10px"><svg style="left:0;top:0" width="10" height="10" viewBox="0 0 10 10"><path d="M1.3 8.7 L5 5" stroke="#3a3a3c" stroke-width="2.3" stroke-linecap="round"/><circle cx="6.3" cy="3.3" r="3.1" fill="#3a3a3c"/><circle cx="7.9" cy="1.5" r="1.55" fill="#f5f3f7"/></svg></div><div class="t" style="left:30px;top:2.1px;font-size:10px;color:#000;transform:scaleX(0.9);transform-origin:0 0;-webkit-text-stroke:0.15px #000">Store</div><div class="a" style="left:17px;top:16.45px;width:10px;height:10px"><svg style="left:0;top:0" width="10" height="10" viewBox="0 0 10 10"><path d="M1.3 8.7 L5 5" stroke="#3a3a3c" stroke-width="2.3" stroke-linecap="round"/><circle cx="6.3" cy="3.3" r="3.1" fill="#3a3a3c"/><circle cx="7.9" cy="1.5" r="1.55" fill="#f5f3f7"/></svg></div><div class="t" style="left:30px;top:16.35px;font-size:10px;color:#000;transform:scaleX(0.9);transform-origin:0 0;-webkit-text-stroke:0.15px #000">Manager</div><div class="a" style="left:17px;top:30.7px;width:10px;height:10px"><svg style="left:0;top:0" width="10" height="10" viewBox="0 0 10 10"><path d="M1.3 8.7 L5 5" stroke="#3a3a3c" stroke-width="2.3" stroke-linecap="round"/><circle cx="6.3" cy="3.3" r="3.1" fill="#3a3a3c"/><circle cx="7.9" cy="1.5" r="1.55" fill="#f5f3f7"/></svg></div><div class="t" style="left:30px;top:30.6px;font-size:10px;color:#000;transform:scaleX(0.9);transform-origin:0 0;-webkit-text-stroke:0.15px #000">TotalSales</div></div><div class="a" style="left:0;top:71.25px;width:116px;height:23.5px"><svg style="left:4px;top:5.5px" width="9" height="8" viewBox="0 0 9 8"><rect x="0.5" y="0.5" width="8" height="7" rx="1.5" fill="#e8e8ee" stroke="#b9b9c0"/><path d="M1.5 4 H7.5" stroke="#7b8fd0"/></svg><div class="t" style="left:16px;top:3px;font-size:8.7px;color:#2a3040">Navigation Properties</div><div class="a" style="left:3px;top:14px;width:110px;height:1px;background:#f4f6fc"></div></div></div><div class="a" style="left:308px;top:397.5px;width:116px;height:80.5px;background:#d9e2f9;box-shadow:0 0 0 1.5px #e4eafa"><svg style="left:5px;top:5.5px" width="12" height="10" viewBox="0 0 12 10"><rect x="2" y="2" width="8.8" height="6.6" fill="#ffffff"/><rect x="1.6" y="0" width="9.6" height="2.2" fill="#303032"/><path d="M10.7 2 V8.7 H5" fill="none" stroke="#454547" stroke-width="1"/><rect x="0.5" y="4.6" width="6.6" height="4" rx="2" fill="#ffffff" stroke="#363638" stroke-width="1"/><path d="M2.2 6.6 H5.6" stroke="#363638" stroke-width="1"/></svg><div class="t" style="left:22px;top:3.2px;font-size:9.5px;color:#141a2c;transform:scaleX(0.945);transform-origin:0 0;-webkit-text-stroke:0.1px #141a2c">SalesByFilmCate...</div><svg style="right:3.8px;top:3.5px" width="11" height="11" viewBox="0 0 11 11"><defs><linearGradient id="cbg" x1="0" y1="0" x2="0" y2="1"><stop offset="0" stop-color="#f8f8fc"/><stop offset="1" stop-color="#e2e4ec"/></linearGradient></defs><rect x="0.5" y="0.5" width="10" height="10" rx="1.5" fill="url(#cbg)" stroke="#b4b6be"/><path d="M2.6 5 L5.5 2.4 L8.4 5 M2.6 8 L5.5 5.4 L8.4 8" fill="none" stroke="#4a6fd6" stroke-width="0.9"/></svg><div class="a" style="left:0;top:28.5px;width:116px;height:28.5px;background:#f5f3f7"><div class="a" style="left:17px;top:2.2px;width:10px;height:10px"><svg style="left:0;top:0" width="10" height="10" viewBox="0 0 10 10"><path d="M1.3 8.7 L5 5" stroke="#3a3a3c" stroke-width="2.3" stroke-linecap="round"/><circle cx="6.3" cy="3.3" r="3.1" fill="#3a3a3c"/><circle cx="7.9" cy="1.5" r="1.55" fill="#f5f3f7"/></svg></div><div class="t" style="left:30px;top:2.1px;font-size:10px;color:#000;transform:scaleX(0.9);transform-origin:0 0;-webkit-text-stroke:0.15px #000">Category</div><div class="a" style="left:17px;top:16.45px;width:10px;height:10px"><svg style="left:0;top:0" width="10" height="10" viewBox="0 0 10 10"><path d="M1.3 8.7 L5 5" stroke="#3a3a3c" stroke-width="2.3" stroke-linecap="round"/><circle cx="6.3" cy="3.3" r="3.1" fill="#3a3a3c"/><circle cx="7.9" cy="1.5" r="1.55" fill="#f5f3f7"/></svg></div><div class="t" style="left:30px;top:16.35px;font-size:10px;color:#000;transform:scaleX(0.9);transform-origin:0 0;-webkit-text-stroke:0.15px #000">TotalSales</div></div><div class="a" style="left:0;top:57.0px;width:116px;height:23.5px"><svg style="left:4px;top:5.5px" width="9" height="8" viewBox="0 0 9 8"><rect x="0.5" y="0.5" width="8" height="7" rx="1.5" fill="#e8e8ee" stroke="#b9b9c0"/><path d="M1.5 4 H7.5" stroke="#7b8fd0"/></svg><div class="t" style="left:16px;top:3px;font-size:8.7px;color:#2a3040">Navigation Properties</div></div></div></div>
<div class="a" style="left:717px;top:93px;width:17px;height:683px;background:#2d2b2f"></div>
<svg style="left:720px;top:100px" width="10" height="6" viewBox="0 0 10 6"><path d="M0 6 L5 0.5 L10 6 Z" fill="#9a999d"/></svg>
<div class="a" style="left:721px;top:278px;width:9px;height:227px;background:#4d4b4f"></div>
<svg style="left:720px;top:765px" width="10" height="6" viewBox="0 0 10 6"><path d="M0 0 L5 5.5 L10 0 Z" fill="#9a999d"/></svg>
<div class="a" style="left:33px;top:776px;width:684px;height:17px;background:#2d2b2f"></div>
<svg style="left:38.5px;top:779.5px" width="6" height="10" viewBox="0 0 6 10"><path d="M6 0 L0.5 5 L6 10 Z" fill="#9a999d"/></svg>
<div class="a" style="left:345px;top:780px;width:173px;height:9px;background:#4d4b4f"></div>
<svg style="left:706px;top:779px" width="6" height="10" viewBox="0 0 6 10"><path d="M0 0 L5.5 5 L0 10 Z" fill="#9a999d"/></svg>
<div class="a" style="left:742px;top:71px;width:228px;height:724px;border:1px solid #3d3b40;background:#211f22"></div>
<div class="t" style="left:747.5px;top:77px;font-size:12px;color:#d0d0d0;transform:scaleX(0.9783);transform-origin:0.00px 0">Solution Explorer</div>
<svg style="left:921px;top:80px" width="8" height="5" viewBox="0 0 8 5"><path d="M0 0 H8 L4 4.5 Z" fill="#d8d8d8"/></svg>
<svg style="left:938px;top:77px" width="8" height="11" viewBox="0 0 8 11"><path d="M1.5 0.5 H6.5 M2 0.5 V6 H6 V0.5 M0 6.5 H8 M4 6.5 V11" fill="none" stroke="#e0e0e0" stroke-width="1.1"/></svg>
<svg style="left:953px;top:77px" width="11" height="11" viewBox="0 0 11 11"><path d="M1 1 L10 10 M10 1 L1 10" stroke="#e6e6e6" stroke-width="1.1"/></svg>
<svg style="left:749px;top:99px" width="17" height="17" viewBox="0 0 17 17"><rect x="7.5" y="1.5" width="8" height="10" fill="#211f22" stroke="#e8e8e8"/><path d="M7 1.6 H16" stroke="#e8e8e8" stroke-width="1.6"/><path d="M9 4.5 H9.8 M11 4.5 H14 M9 6.5 H9.8 M11 6.5 H14 M9 8.5 H9.8 M11 8.5 H14" stroke="#e8e8e8" stroke-width="1"/><g fill="#8b5cd6"><path d="M8.6 6.8 L10.2 7.6 V15.4 L8.6 16.2 L2.6 11.8 L1.6 12.6 L0.6 12 V9.2 L1.6 8.6 L2.6 9.4 Z M8.6 9.4 L4.6 11.2 L8.6 13.6 Z"/></g></svg>
<div class="a" style="left:772px;top:97px;width:1px;height:20px;background:#3f3e43"></div>
<svg style="left:780px;top:98px" width="17" height="17" viewBox="0 0 17 17"><path d="M0 0 H6 L3.8 3 V6 H2.2 V3 Z" fill="#4b9fe8"/><circle cx="10" cy="10" r="5.5" fill="none" stroke="#e0e0e0" stroke-width="1.1"/><path d="M10 6.5 V10.5 H13" fill="none" stroke="#e0e0e0" stroke-width="1.1"/></svg>
<svg style="left:803px;top:106px" width="6" height="4" viewBox="0 0 6 4"><path d="M0 0 H6 L3 3.5 Z" fill="#d8d8d8"/></svg>
<svg style="left:816px;top:100px" width="15" height="14" viewBox="0 0 15 14"><path d="M1 4.5 H14 M4.5 1 L1 4.5 M1 9.5 H14 M10.5 13 L14 9.5" fill="none" stroke="#e0e0e0" stroke-width="1.2"/></svg>
<svg style="left:838px;top:99px" width="16" height="16" viewBox="0 0 16 16"><path d="M3.5 0.5 H15.5 V12.5" fill="none" stroke="#e0e0e0"/><rect x="0.5" y="3.5" width="12" height="12" fill="none" stroke="#e0e0e0"/><path d="M3 9.5 H10" stroke="#e0e0e0"/></svg>
<svg style="left:860px;top:99px" width="15" height="16" viewBox="0 0 15 16"><rect x="4.5" y="0.5" width="10" height="10" fill="none" stroke="#e0e0e0"/><rect x="0.5" y="4.5" width="10" height="10" fill="none" stroke="#e0e0e0"/><rect x="5" y="5" width="5" height="5" fill="#555"/></svg>
<div class="a" style="left:882px;top:97px;width:1px;height:20px;background:#3f3e43"></div>
<div class="a" style="left:887px;top:96px;width:23px;height:22px;border:1px solid #5e51c2;background:#2c2a2f"></div>
<svg style="left:891px;top:100px" width="15" height="14" viewBox="0 0 15 14"><rect x="0.5" y="0.5" width="3" height="3" fill="none" stroke="#e0e0e0"/><rect x="5.5" y="5" width="4" height="3.5" fill="none" stroke="#e0e0e0"/><rect x="9.5" y="9.5" width="4.5" height="4" fill="none" stroke="#e0e0e0"/><path d="M2 3.5 L5.5 6.5 M9 8.5 L10.5 9.5" stroke="#e0e0e0"/></svg>
<svg style="left:913px;top:106px" width="6" height="4" viewBox="0 0 6 4"><path d="M0 0 H6 L3 3.5 Z" fill="#d8d8d8"/></svg>
<div class="a" style="left:925px;top:97px;width:1px;height:20px;background:#3f3e43"></div>
<svg style="left:933px;top:99px" width="15" height="15" viewBox="0 0 15 15"><path d="M2 13 L7.6 7.4" stroke="#e0e0e0" stroke-width="3.2" stroke-linecap="round"/><path d="M2.1 12.9 L7.4 7.6" stroke="#211f22" stroke-width="1.1" stroke-linecap="round"/><circle cx="10.1" cy="4.9" r="4" fill="#e0e0e0"/><circle cx="10.1" cy="4.9" r="1.7" fill="#211f22"/><circle cx="13" cy="2" r="2.1" fill="#211f22"/></svg>
<svg style="left:960px;top:98px" width="8" height="4" viewBox="0 0 8 4"><path d="M0 0 L2.5 2 L0 4 Z M4 0 L6.5 2 L4 4 Z" fill="#d8d8d8"/></svg>
<div class="a" style="left:745px;top:121px;width:222px;height:21px;background:#333236"></div>
<div class="t" style="left:749.5px;top:125px;font-size:12px;color:#cfcfcf;transform:scaleX(0.9802);transform-origin:0.00px 0">Search Solution Explorer (Ctrl+ж)</div>
<svg style="left:938px;top:123px" width="14" height="14" viewBox="0 0 14 14"><circle cx="8.5" cy="5.5" r="4" fill="none" stroke="#e0e0e0" stroke-width="1.5"/><line x1="5.5" y1="8.5" x2="1" y2="13" stroke="#e0e0e0" stroke-width="1.8"/></svg>
<svg style="left:957px;top:129px" width="6" height="4" viewBox="0 0 6 4"><path d="M0 0 H6 L3 3.5 Z" fill="#d8d8d8"/></svg>
<div class="a" style="left:0;top:0;width:968.5px;height:775px;overflow:hidden;clip-path:inset(142px 0 0 743px)"><svg style="left:758px;top:147px" width="15" height="14" viewBox="0 0 15 14"><path d="M0.5 13 V0.5 H13.5 V5 M0.5 3.5 H13.5 M0.5 13.5 H4" fill="none" stroke="#d8d8d8"/><path d="M5 8 L6.5 7 L9 9.2 L12 6 L14 7 V13 L12 14 L9 11 L6.5 13 L5 12 Z M6.3 8.8 V11.3 L7.6 10 Z M12 8.5 L10.4 10 L12 11.5 Z" fill="#8a62d8" fill-rule="evenodd"/></svg><div class="t" style="left:778.5px;top:148px;font-size:12px;color:#f0f0f0;transform:scaleX(0.9755);transform-origin:0.00px 0">Solution &#39;PgEFCore&#39; (1 of 1 project)</div><div class="a" style="left:743px;top:163px;width:226px;height:19px;background:#3a383c"></div><svg style="left:754px;top:169px" width="7" height="7" viewBox="0 0 7 7"><path d="M7 0 V7 H0 Z" fill="#d8d8d8"/></svg><div class="a" style="left:776px;top:166px;width:15px;height:13px;border:1px solid #bdbdbd"></div><svg style="left:779px;top:169px" width="10" height="8" viewBox="0 0 10 8"><path d="M4 1.3 C3.6 0.8 3.1 0.6 2.5 0.6 C1.3 0.6 0.6 1.8 0.6 4 C0.6 6.2 1.3 7.4 2.5 7.4 C3.1 7.4 3.6 7.2 4 6.7" fill="none" stroke="#6cc36c" stroke-width="1.1"/><path d="M6 0.6 L5.6 7.4 M8.4 0.6 L8 7.4 M4.8 2.7 H9.6 M4.8 5.3 H9.6" stroke="#b6e3b6" stroke-width="0.9"/></svg><div class="t" style="left:796.0px;top:167px;font-size:12px;color:#f4f4f4;font-weight:700;transform:scaleX(0.8966);transform-origin:0.00px 0">PgEFCore</div><svg style="left:772px;top:186.5px" width="7" height="11" viewBox="0 0 7 11"><path d="M0.7 0.8 L5.3 5 L0.7 9.2 Z" fill="none" stroke="#d0d0d0" stroke-width="1.1"/></svg><svg style="left:793px;top:185.0px" width="17" height="12" viewBox="0 0 17 12"><path d="M6 4 H10 M4 8 H8.5" stroke="#8a898d" stroke-width="1"/><rect x="10.5" y="1.5" width="5" height="5" fill="none" stroke="#c8c8c8" stroke-width="1.1"/><rect x="2.5" y="2.5" width="3" height="3" fill="none" stroke="#d8d8d8" stroke-width="1.1"/><rect x="0.5" y="6.5" width="3" height="3" fill="none" stroke="#eeeeee" stroke-width="1.1"/><rect x="8.5" y="5.5" width="5" height="5" fill="#2a282c" stroke="#eeeeee" stroke-width="1.1"/></svg><div class="t" style="left:814px;top:185.9px;font-size:12px;color:#f0f0f0">Dependencies</div><svg style="left:772px;top:205.5px" width="7" height="11" viewBox="0 0 7 11"><path d="M0.7 0.8 L5.3 5 L0.7 9.2 Z" fill="none" stroke="#d0d0d0" stroke-width="1.1"/></svg><div class="a" style="left:794px;top:204.5px;width:16px;height:12px"><svg style="left:0;top:0" width="16" height="12" viewBox="0 0 16 12"><path d="M6.2 3.6 C5.6 2.8 4.8 2.4 3.9 2.4 C2.1 2.4 0.9 4 0.9 6.4 C0.9 8.8 2.1 10.4 3.9 10.4 C4.8 10.4 5.6 10 6.2 9.2" fill="none" stroke="#6cc06c" stroke-width="1.5"/><path d="M9.4 1 V8.4 M12.6 1 V8.4 M7.8 3.1 H14.4 M7.8 6.3 H14.4" stroke="#9ad89a" stroke-width="1.4"/></svg></div><div class="t" style="left:814px;top:204.9px;font-size:12px;color:#f0f0f0">DataModel1.ActorInfo.cs</div><svg style="left:772px;top:224.5px" width="7" height="11" viewBox="0 0 7 11"><path d="M0.7 0.8 L5.3 5 L0.7 9.2 Z" fill="none" stroke="#d0d0d0" stroke-width="1.1"/></svg><div class="a" style="left:794px;top:223.5px;width:16px;height:12px"><svg style="left:0;top:0" width="16" height="12" viewBox="0 0 16 12"><path d="M6.2 3.6 C5.6 2.8 4.8 2.4 3.9 2.4 C2.1 2.4 0.9 4 0.9 6.4 C0.9 8.8 2.1 10.4 3.9 10.4 C4.8 10.4 5.6 10 6.2 9.2" fill="none" stroke="#6cc06c" stroke-width="1.5"/><path d="M9.4 1 V8.4 M12.6 1 V8.4 M7.8 3.1 H14.4 M7.8 6.3 H14.4" stroke="#9ad89a" stroke-width="1.4"/></svg></div><div class="t" style="left:814px;top:223.9px;font-size:12px;color:#f0f0f0">DataModel1.Customer1.cs</div><svg style="left:772px;top:243.5px" width="7" height="11" viewBox="0 0 7 11"><path d="M0.7 0.8 L5.3 5 L0.7 9.2 Z" fill="none" stroke="#d0d0d0" stroke-width="1.1"/></svg><div class="a" style="left:794px;top:242.5px;width:16px;height:12px"><svg style="left:0;top:0" width="16" height="12" viewBox="0 0 16 12"><path d="M6.2 3.6 C5.6 2.8 4.8 2.4 3.9 2.4 C2.1 2.4 0.9 4 0.9 6.4 C0.9 8.8 2.1 10.4 3.9 10.4 C4.8 10.4 5.6 10 6.2 9.2" fill="none" stroke="#6cc06c" stroke-width="1.5"/><path d="M9.4 1 V8.4 M12.6 1 V8.4 M7.8 3.1 H14.4 M7.8 6.3 H14.4" stroke="#9ad89a" stroke-width="1.4"/></svg></div><div class="t" style="left:814px;top:242.9px;font-size:12px;color:#f0f0f0">DataModel1.CustomerList.cs</div><svg style="left:794px;top:260.0px" width="13" height="15" viewBox="0 0 13 15"><path d="M0.5 0.5 H8.5 L12.5 4.5 V14.5 H0.5 Z" fill="#2a292d" stroke="#d0d0d0"/></svg><div class="t" style="left:814px;top:261.9px;font-size:12px;color:#f0f0f0">DataModel1.Diagram1.view</div><svg style="left:794px;top:279.0px" width="13" height="15" viewBox="0 0 13 15"><path d="M0.5 0.5 H8.5 L12.5 4.5 V14.5 H0.5 Z" fill="#2a292d" stroke="#d0d0d0"/></svg><div class="t" style="left:814px;top:280.9px;font-size:12px;color:#f0f0f0">DataModel1.edps</div><svg style="left:772px;top:300.5px" width="7" height="11" viewBox="0 0 7 11"><path d="M0.7 0.8 L5.3 5 L0.7 9.2 Z" fill="none" stroke="#d0d0d0" stroke-width="1.1"/></svg><svg style="left:793px;top:298.5px" width="14" height="15" viewBox="0 0 14 15"><rect x="0.5" y="0.5" width="13" height="14" fill="#f3f0d8" stroke="#bba"/><path d="M7 3.5 V6 M3.5 6 H10.5 M3.5 6 V9 M10.5 6 V9 M3.5 9 V11" stroke="#3766c4" fill="none"/><rect x="5" y="2" width="4" height="3" fill="#5b86d8"/><rect x="2" y="9" width="3.5" height="3" fill="#5b86d8"/><rect x="9" y="9" width="3.5" height="3" fill="#5b86d8"/></svg><div class="t" style="left:814px;top:299.9px;font-size:12px;color:#f0f0f0">DataModel1.efml</div><svg style="left:772px;top:319.5px" width="7" height="11" viewBox="0 0 7 11"><path d="M0.7 0.8 L5.3 5 L0.7 9.2 Z" fill="none" stroke="#d0d0d0" stroke-width="1.1"/></svg><div class="a" style="left:794px;top:318.5px;width:16px;height:12px"><svg style="left:0;top:0" width="16" height="12" viewBox="0 0 16 12"><path d="M6.2 3.6 C5.6 2.8 4.8 2.4 3.9 2.4 C2.1 2.4 0.9 4 0.9 6.4 C0.9 8.8 2.1 10.4 3.9 10.4 C4.8 10.4 5.6 10 6.2 9.2" fill="none" stroke="#6cc06c" stroke-width="1.5"/><path d="M9.4 1 V8.4 M12.6 1 V8.4 M7.8 3.1 H14.4 M7.8 6.3 H14.4" stroke="#9ad89a" stroke-width="1.4"/></svg></div><div class="t" style="left:814px;top:318.9px;font-size:12px;color:#f0f0f0">DataModel1.FilmList.cs</div><svg style="left:772px;top:338.5px" width="7" height="11" viewBox="0 0 7 11"><path d="M0.7 0.8 L5.3 5 L0.7 9.2 Z" fill="none" stroke="#d0d0d0" stroke-width="1.1"/></svg><div class="a" style="left:794px;top:337.5px;width:16px;height:12px"><svg style="left:0;top:0" width="16" height="12" viewBox="0 0 16 12"><path d="M6.2 3.6 C5.6 2.8 4.8 2.4 3.9 2.4 C2.1 2.4 0.9 4 0.9 6.4 C0.9 8.8 2.1 10.4 3.9 10.4 C4.8 10.4 5.6 10 6.2 9.2" fill="none" stroke="#6cc06c" stroke-width="1.5"/><path d="M9.4 1 V8.4 M12.6 1 V8.4 M7.8 3.1 H14.4 M7.8 6.3 H14.4" stroke="#9ad89a" stroke-width="1.4"/></svg></div><div class="t" style="left:814px;top:337.9px;font-size:12px;color:#f0f0f0">DataModel1.Language.cs</div><svg style="left:772px;top:357.5px" width="7" height="11" viewBox="0 0 7 11"><path d="M0.7 0.8 L5.3 5 L0.7 9.2 Z" fill="none" stroke="#d0d0d0" stroke-width="1.1"/></svg><div class="a" style="left:794px;top:356.5px;width:16px;height:12px"><svg style="left:0;top:0" width="16" height="12" viewBox="0 0 16 12"><path d="M6.2 3.6 C5.6 2.8 4.8 2.4 3.9 2.4 C2.1 2.4 0.9 4 0.9 6.4 C0.9 8.8 2.1 10.4 3.9 10.4 C4.8 10.4 5.6 10 6.2 9.2" fill="none" stroke="#6cc06c" stroke-width="1.5"/><path d="M9.4 1 V8.4 M12.6 1 V8.4 M7.8 3.1 H14.4 M7.8 6.3 H14.4" stroke="#9ad89a" stroke-width="1.4"/></svg></div><div class="t" style="left:814px;top:356.9px;font-size:12px;color:#f0f0f0">DataModel1.NicerButSlowerFilmList.cs</div><svg style="left:772px;top:376.5px" width="7" height="11" viewBox="0 0 7 11"><path d="M0.7 0.8 L5.3 5 L0.7 9.2 Z" fill="none" stroke="#d0d0d0" stroke-width="1.1"/></svg><div class="a" style="left:794px;top:375.5px;width:16px;height:12px"><svg style="left:0;top:0" width="16" height="12" viewBox="0 0 16 12"><path d="M6.2 3.6 C5.6 2.8 4.8 2.4 3.9 2.4 C2.1 2.4 0.9 4 0.9 6.4 C0.9 8.8 2.1 10.4 3.9 10.4 C4.8 10.4 5.6 10 6.2 9.2" fill="none" stroke="#6cc06c" stroke-width="1.5"/><path d="M9.4 1 V8.4 M12.6 1 V8.4 M7.8 3.1 H14.4 M7.8 6.3 H14.4" stroke="#9ad89a" stroke-width="1.4"/></svg></div><div class="t" style="left:814px;top:375.9px;font-size:12px;color:#f0f0f0">DataModel1.Order.cs</div><svg style="left:772px;top:395.5px" width="7" height="11" viewBox="0 0 7 11"><path d="M0.7 0.8 L5.3 5 L0.7 9.2 Z" fill="none" stroke="#d0d0d0" stroke-width="1.1"/></svg><div class="a" style="left:794px;top:394.5px;width:16px;height:12px"><svg style="left:0;top:0" width="16" height="12" viewBox="0 0 16 12"><path d="M6.2 3.6 C5.6 2.8 4.8 2.4 3.9 2.4 C2.1 2.4 0.9 4 0.9 6.4 C0.9 8.8 2.1 10.4 3.9 10.4 C4.8 10.4 5.6 10 6.2 9.2" fill="none" stroke="#6cc06c" stroke-width="1.5"/><path d="M9.4 1 V8.4 M12.6 1 V8.4 M7.8 3.1 H14.4 M7.8 6.3 H14.4" stroke="#9ad89a" stroke-width="1.4"/></svg></div><div class="t" style="left:814px;top:394.9px;font-size:12px;color:#f0f0f0">DataModel1.Panelreadingsales.cs</div><svg style="left:772px;top:414.5px" width="7" height="11" viewBox="0 0 7 11"><path d="M0.7 0.8 L5.3 5 L0.7 9.2 Z" fill="none" stroke="#d0d0d0" stroke-width="1.1"/></svg><div class="a" style="left:794px;top:413.5px;width:16px;height:12px"><svg style="left:0;top:0" width="16" height="12" viewBox="0 0 16 12"><path d="M6.2 3.6 C5.6 2.8 4.8 2.4 3.9 2.4 C2.1 2.4 0.9 4 0.9 6.4 C0.9 8.8 2.1 10.4 3.9 10.4 C4.8 10.4 5.6 10 6.2 9.2" fill="none" stroke="#6cc06c" stroke-width="1.5"/><path d="M9.4 1 V8.4 M12.6 1 V8.4 M7.8 3.1 H14.4 M7.8 6.3 H14.4" stroke="#9ad89a" stroke-width="1.4"/></svg></div><div class="t" style="left:814px;top:413.9px;font-size:12px;color:#f0f0f0">DataModel1.postgresModel.cs</div><svg style="left:772px;top:433.5px" width="7" height="11" viewBox="0 0 7 11"><path d="M0.7 0.8 L5.3 5 L0.7 9.2 Z" fill="none" stroke="#d0d0d0" stroke-width="1.1"/></svg><div class="a" style="left:794px;top:432.5px;width:16px;height:12px"><svg style="left:0;top:0" width="16" height="12" viewBox="0 0 16 12"><path d="M6.2 3.6 C5.6 2.8 4.8 2.4 3.9 2.4 C2.1 2.4 0.9 4 0.9 6.4 C0.9 8.8 2.1 10.4 3.9 10.4 C4.8 10.4 5.6 10 6.2 9.2" fill="none" stroke="#6cc06c" stroke-width="1.5"/><path d="M9.4 1 V8.4 M12.6 1 V8.4 M7.8 3.1 H14.4 M7.8 6.3 H14.4" stroke="#9ad89a" stroke-width="1.4"/></svg></div><div class="t" style="left:814px;top:432.9px;font-size:12px;color:#f0f0f0">DataModel1.Product.cs</div><svg style="left:772px;top:452.5px" width="7" height="11" viewBox="0 0 7 11"><path d="M0.7 0.8 L5.3 5 L0.7 9.2 Z" fill="none" stroke="#d0d0d0" stroke-width="1.1"/></svg><div class="a" style="left:794px;top:451.5px;width:16px;height:12px"><svg style="left:0;top:0" width="16" height="12" viewBox="0 0 16 12"><path d="M6.2 3.6 C5.6 2.8 4.8 2.4 3.9 2.4 C2.1 2.4 0.9 4 0.9 6.4 C0.9 8.8 2.1 10.4 3.9 10.4 C4.8 10.4 5.6 10 6.2 9.2" fill="none" stroke="#6cc06c" stroke-width="1.5"/><path d="M9.4 1 V8.4 M12.6 1 V8.4 M7.8 3.1 H14.4 M7.8 6.3 H14.4" stroke="#9ad89a" stroke-width="1.4"/></svg></div><div class="t" style="left:814px;top:451.9px;font-size:12px;color:#f0f0f0">DataModel1.SalesByFilmCategory.cs</div><svg style="left:772px;top:471.5px" width="7" height="11" viewBox="0 0 7 11"><path d="M0.7 0.8 L5.3 5 L0.7 9.2 Z" fill="none" stroke="#d0d0d0" stroke-width="1.1"/></svg><div class="a" style="left:794px;top:470.5px;width:16px;height:12px"><svg style="left:0;top:0" width="16" height="12" viewBox="0 0 16 12"><path d="M6.2 3.6 C5.6 2.8 4.8 2.4 3.9 2.4 C2.1 2.4 0.9 4 0.9 6.4 C0.9 8.8 2.1 10.4 3.9 10.4 C4.8 10.4 5.6 10 6.2 9.2" fill="none" stroke="#6cc06c" stroke-width="1.5"/><path d="M9.4 1 V8.4 M12.6 1 V8.4 M7.8 3.1 H14.4 M7.8 6.3 H14.4" stroke="#9ad89a" stroke-width="1.4"/></svg></div><div class="t" style="left:814px;top:470.9px;font-size:12px;color:#f0f0f0">DataModel1.SalesByStore.cs</div><svg style="left:772px;top:490.5px" width="7" height="11" viewBox="0 0 7 11"><path d="M0.7 0.8 L5.3 5 L0.7 9.2 Z" fill="none" stroke="#d0d0d0" stroke-width="1.1"/></svg><div class="a" style="left:794px;top:489.5px;width:16px;height:12px"><svg style="left:0;top:0" width="16" height="12" viewBox="0 0 16 12"><path d="M6.2 3.6 C5.6 2.8 4.8 2.4 3.9 2.4 C2.1 2.4 0.9 4 0.9 6.4 C0.9 8.8 2.1 10.4 3.9 10.4 C4.8 10.4 5.6 10 6.2 9.2" fill="none" stroke="#6cc06c" stroke-width="1.5"/><path d="M9.4 1 V8.4 M12.6 1 V8.4 M7.8 3.1 H14.4 M7.8 6.3 H14.4" stroke="#9ad89a" stroke-width="1.4"/></svg></div><div class="t" style="left:814px;top:489.9px;font-size:12px;color:#f0f0f0">DataModel1.StaffList.cs</div><svg style="left:772px;top:509.5px" width="7" height="11" viewBox="0 0 7 11"><path d="M0.7 0.8 L5.3 5 L0.7 9.2 Z" fill="none" stroke="#d0d0d0" stroke-width="1.1"/></svg><div class="a" style="left:794px;top:508.5px;width:16px;height:12px"><svg style="left:0;top:0" width="16" height="12" viewBox="0 0 16 12"><path d="M6.2 3.6 C5.6 2.8 4.8 2.4 3.9 2.4 C2.1 2.4 0.9 4 0.9 6.4 C0.9 8.8 2.1 10.4 3.9 10.4 C4.8 10.4 5.6 10 6.2 9.2" fill="none" stroke="#6cc06c" stroke-width="1.5"/><path d="M9.4 1 V8.4 M12.6 1 V8.4 M7.8 3.1 H14.4 M7.8 6.3 H14.4" stroke="#9ad89a" stroke-width="1.4"/></svg></div><div class="t" style="left:814px;top:508.9px;font-size:12px;color:#f0f0f0">Program.cs</div></div>
<div class="a" style="left:743px;top:777px;width:226px;height:17px;background:#2d2b2f"></div>
<svg style="left:749px;top:780px" width="6" height="10" viewBox="0 0 6 10"><path d="M6 0 L0.5 5 L6 10 Z" fill="#9a999d"/></svg>
<div class="a" style="left:760px;top:781px;width:158px;height:9px;background:#4d4b4f"></div>
<svg style="left:958px;top:780px" width="6" height="10" viewBox="0 0 6 10"><path d="M0 0 L5.5 5 L0 10 Z" fill="#9a999d"/></svg>
<div class="t" style="left:30.6px;top:803.5px;font-size:12px;color:#c8c8c8;transform:scaleX(0.9375);transform-origin:1.00px 0">Error List</div>
<div class="a" style="left:31px;top:820px;width:46px;height:6px;background:#333236"></div>
<div class="t" style="left:89.9px;top:803.5px;font-size:12px;color:#c8c8c8;transform:scaleX(1.0278);transform-origin:0.00px 0">Output</div>
<div class="a" style="left:89px;top:820px;width:38px;height:6px;background:#333236"></div>
<div class="a" style="left:0;top:826px;width:1000px;height:24px;background:#444246"></div>
<svg style="left:4px;top:830px" width="17" height="17" viewBox="0 0 17 17"><path d="M0.5 0.5 H16.5 V13.5 H10 L8.5 15.5 L7 13.5 H0.5 Z" fill="none" stroke="#e0e0e0"/><path d="M4 7 L7 10 L13 3" fill="none" stroke="#e0e0e0" stroke-width="1.1"/></svg>
<div class="t" style="left:27.6px;top:832px;font-size:12px;color:#f0f0f0;transform:scaleX(0.9265);transform-origin:1.00px 0">Ready</div>
<svg style="left:631px;top:830px" width="11" height="15" viewBox="0 0 11 15"><path d="M5.5 15 V1 M0.8 5.5 L5.5 0.8 L10.2 5.5" fill="none" stroke="#e8e8e8" stroke-width="1.1"/></svg>
<div class="t" style="left:652.5px;top:832px;font-size:12px;color:#f0f0f0;transform:scaleX(0.9831);transform-origin:0.00px 0">Add to Source Control</div>
<svg style="left:776px;top:835px" width="8" height="5" viewBox="0 0 8 5"><path d="M0 5 L4 0.5 L8 5 Z" fill="#f0f0f0"/></svg>
<svg style="left:807px;top:830px" width="16" height="16" viewBox="0 0 16 16"><rect x="0.5" y="1.5" width="14" height="3.5" fill="none" stroke="#e8e8e8"/><path d="M1.5 5 V14.5 H13.5 V5" fill="none" stroke="#e8e8e8"/><path d="M5.5 5 V11.5 L7.5 10 L9.5 11.5 V5" fill="none" stroke="#e8e8e8"/></svg>
<div class="t" style="left:828.5px;top:832px;font-size:12px;color:#f0f0f0;transform:scaleX(0.9468);transform-origin:0.00px 0">Select Repository</div>
<svg style="left:924px;top:835px" width="9" height="5" viewBox="0 0 9 5"><path d="M0 5 L4.5 0.3 L9 5 Z" fill="#f0f0f0"/></svg>
<svg style="left:951px;top:830px" width="22" height="20" viewBox="0 0 22 20"><path d="M1.5 12.5 C2.5 11.5 3 10 3 7 C3 3.2 4.8 1 7.5 1 C10.2 1 12 3.2 12 7 V8 M1 13 H9 M5.5 14.5 C6 15.5 6.8 16 7.5 16" fill="none" stroke="#dcdcdc" stroke-width="1.1"/><circle cx="15" cy="14" r="5.3" fill="#f48a96"/><text x="15" y="17.8" font-size="10.5" text-anchor="middle" fill="#111" font-family="Liberation Sans">2</text></svg>
<svg style="left:988px;top:837px" width="10" height="10" viewBox="0 0 10 10"><g fill="#9a999d"><rect x="8" y="0" width="1" height="1"/><rect x="6" y="2" width="1" height="1"/><rect x="8" y="2" width="1" height="1"/><rect x="4" y="4" width="1" height="1"/><rect x="6" y="4" width="1" height="1"/><rect x="8" y="4" width="1" height="1"/><rect x="2" y="6" width="1" height="1"/><rect x="4" y="6" width="1" height="1"/><rect x="6" y="6" width="1" height="1"/><rect x="8" y="6" width="1" height="1"/><rect x="0" y="8" width="1" height="1"/><rect x="2" y="8" width="1" height="1"/><rect x="4" y="8" width="1" height="1"/><rect x="6" y="8" width="1" height="1"/><rect x="8" y="8" width="1" height="1"/></g></svg>
</body></html>
